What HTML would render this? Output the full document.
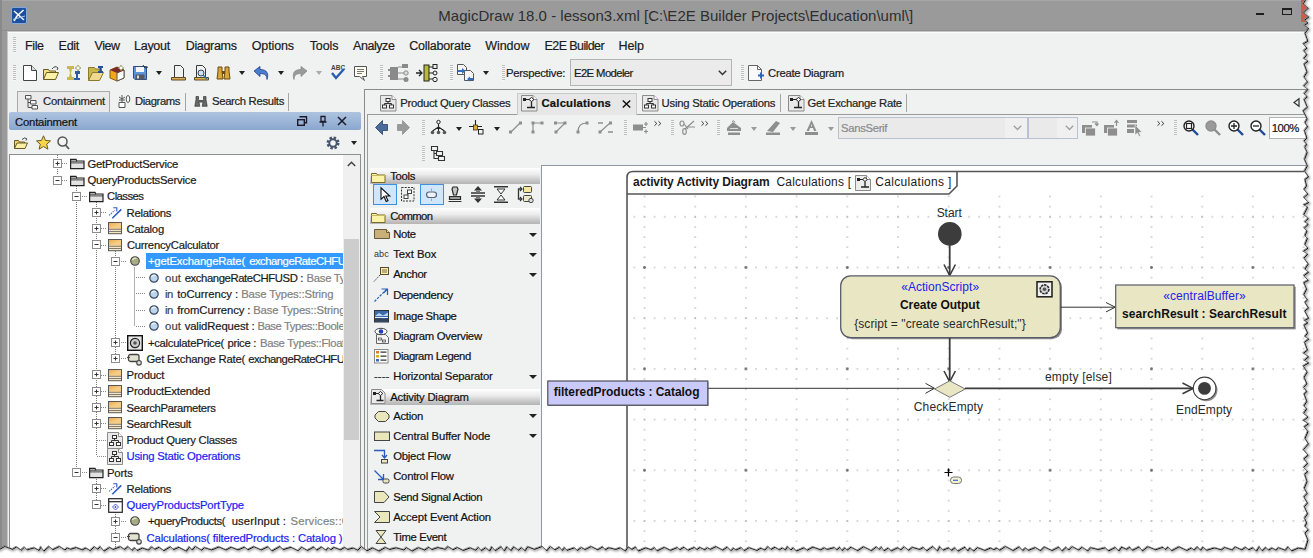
<!DOCTYPE html><html><head><meta charset="utf-8"><title>MagicDraw 18.0 - lesson3.xml</title><style>
html,body{margin:0;padding:0}
body{width:1313px;height:558px;overflow:hidden;position:relative;background:#9a9a9a;font-family:"Liberation Sans",sans-serif;font-size:11.3px;color:#1a1a1a}
.k{-webkit-text-stroke:.2px}
.a{position:absolute}
.x{position:absolute;white-space:pre}
.grip{position:absolute;width:3px;background:repeating-linear-gradient(#bdbdbd 0 1px,#f8f8f8 1px 2px)}
.arr{position:absolute;width:0;height:0;border-left:3.5px solid transparent;border-right:3.5px solid transparent;border-top:4px solid #222}
.hd{position:absolute;left:368px;width:172px;height:15px;background:linear-gradient(#fefefe,#e6e6e6 50%,#b9b9b9)}
.sel{position:absolute;border:1px solid #3d8fe0;background:#cfe6fb;box-sizing:border-box}
svg{position:absolute;overflow:visible}
i{font-style:normal}

</style></head><body>
<div class="a" style="left:8px;top:32px;width:1305px;height:526px;background:#f0f1f1"></div>
<div class="a" style="left:0;top:30px;width:1313px;height:1px;background:#8e8e8e"></div>
<div class="a" style="left:0;top:0;width:1313px;height:1px;background:#a6a6a6"></div>
<div class="a" style="left:8px;top:31px;width:1305px;height:1px;background:#c6c6c6"></div>
<div class="a" style="left:8px;top:32px;width:1305px;height:1px;background:#fcfcfc"></div>
<div class="a" style="left:7px;top:31px;width:1px;height:527px;background:#c4c4c4"></div>
<div class="a" style="left:0;top:0;width:1.500px;height:558px;background:#8a8a8a"></div>
<div class="x" style="left:438.3px;top:6.0px;line-height:20px;font-size:15px;color:#2e2e2e;letter-spacing:0.02px;">MagicDraw 18.0 - lesson3.xml [C:\E2E Builder Projects\Education\uml\]</div>
<svg style="left:11px;top:7px" width="16" height="17" viewBox="0 0 16 17"><rect x=".5" y=".5" width="15" height="16" rx="1.5" fill="#1d4f9f" stroke="#86a9dc"/><path d="M3 4 L13 13 M12.5 3 L6 9 L3 14" stroke="#fff" stroke-width="1.5" fill="none"/><path d="M2 12.5 L14 9" stroke="#a9c8f0" stroke-width="1"/></svg>
<div class="a" style="left:1255.500px;top:12.700px;width:8.500px;height:2.300px;background:#1e1e1e"></div>
<div class="a" style="left:1282px;top:7.500px;width:7.500px;height:4.500px;border:1px solid #1e1e1e;border-top-width:2px"></div>
<div class="a" style="left:1300.500px;top:0;width:12px;height:21.500px;background:#c9604f"></div>
<div class="x k" style="left:25.0px;top:37.9px;line-height:16px;font-size:12.5px;color:#1b1b1b;letter-spacing:-0.39px;">File</div>
<div class="x k" style="left:58.6px;top:37.9px;line-height:16px;font-size:12.5px;color:#1b1b1b;letter-spacing:-0.29px;">Edit</div>
<div class="x k" style="left:94.5px;top:37.9px;line-height:16px;font-size:12.5px;color:#1b1b1b;letter-spacing:-0.44px;">View</div>
<div class="x k" style="left:134.0px;top:37.9px;line-height:16px;font-size:12.5px;color:#1b1b1b;letter-spacing:-0.26px;">Layout</div>
<div class="x k" style="left:185.7px;top:37.9px;line-height:16px;font-size:12.5px;color:#1b1b1b;letter-spacing:-0.32px;">Diagrams</div>
<div class="x k" style="left:251.7px;top:37.9px;line-height:16px;font-size:12.5px;color:#1b1b1b;letter-spacing:-0.11px;">Options</div>
<div class="x k" style="left:309.7px;top:37.9px;line-height:16px;font-size:12.5px;color:#1b1b1b;letter-spacing:-0.08px;">Tools</div>
<div class="x k" style="left:353.0px;top:37.9px;line-height:16px;font-size:12.5px;color:#1b1b1b;letter-spacing:-0.44px;">Analyze</div>
<div class="x k" style="left:409.2px;top:37.9px;line-height:16px;font-size:12.5px;color:#1b1b1b;letter-spacing:-0.22px;">Collaborate</div>
<div class="x k" style="left:485.2px;top:37.9px;line-height:16px;font-size:12.5px;color:#1b1b1b;letter-spacing:-0.03px;">Window</div>
<div class="x k" style="left:544.6px;top:37.9px;line-height:16px;font-size:12.5px;color:#1b1b1b;letter-spacing:-0.60px;">E2E Builder</div>
<div class="x k" style="left:618.6px;top:37.9px;line-height:16px;font-size:12.5px;color:#1b1b1b;letter-spacing:-0.13px;">Help</div>
<div class="grip" style="left:13px;top:37px;height:16px"></div>
<div class="grip" style="left:13px;top:65px;height:16px"></div>
<div class="grip" style="left:380px;top:65px;height:16px"></div>
<div class="grip" style="left:450px;top:65px;height:16px"></div>
<div class="grip" style="left:502px;top:65px;height:16px"></div>
<div class="grip" style="left:741px;top:65px;height:16px"></div>
<div class="arr" style="left:156px;top:71px;border-top-color:#222"></div>
<div class="arr" style="left:239px;top:71px;border-top-color:#222"></div>
<div class="arr" style="left:278px;top:71px;border-top-color:#222"></div>
<div class="arr" style="left:483px;top:71px;border-top-color:#222"></div>
<div class="arr" style="left:316px;top:71px;border-top-color:#aaa"></div>
<svg style="left:23px;top:65px" width="14" height="16" viewBox="0 0 14 16"><path d="M.5 .5h8l5 5v10h-13z" fill="#fff" stroke="#444"/><path d="M8.5 .5v5h5" fill="#ddd" stroke="#444"/></svg>
<svg style="left:43px;top:66px" width="16" height="14" viewBox="0 0 16 14"><path d="M.5 13.5v-10h5l1 1.500h6v2" fill="#f5e08a" stroke="#6b5a1e"/><path d="M.5 13.500l3-7h12l-3 7z" fill="#fbf0a8" stroke="#6b5a1e"/><path d="M9 3q3-4 6-1l-1 2" fill="none" stroke="#444"/></svg>
<svg style="left:66px;top:65px" width="16" height="16" viewBox="0 0 16 16"><path d="M1 1h7v3h-2l-1 4 1 4h2v3h-7v-3h2l1-4-1-4h-2z" fill="#c8b94e"/><path d="M9 6h5v3h-2v4h2v2h-6v-2h2v-4h-1z" fill="#2a5ca8"/><path d="M12 0l1 2 2 1-2 1-1 2-1-2-2-1 2-1z" fill="#fff" stroke="#7a7a3a" stroke-width=".6"/></svg>
<svg style="left:88px;top:65px" width="16" height="16" viewBox="0 0 16 16"><path d="M.5 15.500v-13h6l1 1.500h6v3" fill="#c9b74a" stroke="#8a7a2a"/><path d="M.5 15.500l4-8h11l-4 8z" fill="#f0d890" stroke="#8a7a2a"/><path d="M10 1h5v2h-1.500v3h1.500v2h-5v-2h1.500v-3h-1.500z" fill="#234f9a"/></svg>
<svg style="left:109px;top:65px" width="16" height="16" viewBox="0 0 16 16"><path d="M1 5l7-3 7 3v8l-7 3-7-3z" fill="#f0a818" stroke="#8a5a08"/><path d="M8 8v8l7-3v-8z" fill="#fff" stroke="#555"/><path d="M1 5l7 3 7-3-7-3z" fill="#7a2a2a"/><path d="M12 0l1 2 2 1-2 1-1 2-1-2-2-1 2-1z" fill="#fff" stroke="#7a7a3a" stroke-width=".6"/></svg>
<svg style="left:133px;top:66px" width="14" height="14" viewBox="0 0 14 14"><path d="M.5 .5h13v13h-11.500l-1.500-1.500z" fill="#5a94dc" stroke="#2c4c84"/><rect x="3" y="1" width="8" height="5" fill="#f4f6fa"/><rect x="2.500" y="8.500" width="9" height="5" fill="#555a60"/><rect x="4" y="9.500" width="2" height="3" fill="#ddd"/><path d="M10-1l2 3 3-1" stroke="#333" fill="none"/></svg>
<svg style="left:171px;top:65px" width="15" height="16" viewBox="0 0 15 16"><path d="M3.500 .5h6l3 3v9h-9z" fill="url(#dg)" stroke="#3a3a3a"/><path d="M.5 12.500h14v2.500h-14z" fill="#e0b050" stroke="#5a4a2a"/></svg>
<svg style="left:194px;top:65px" width="15" height="16" viewBox="0 0 15 16"><path d="M2.500 .5h6l3 3v9h-9z" fill="url(#dg)" stroke="#3a3a3a"/><path d="M.5 12.500h14v2.500h-14z" fill="#e0b050" stroke="#5a4a2a"/><circle cx="7" cy="8" r="3" fill="#cfe0f5" stroke="#345"/><path d="M9 10l4 4" stroke="#27a" stroke-width="1.5"/></svg>
<svg style="left:216px;top:66px" width="15" height="14" viewBox="0 0 15 14"><path d="M2 1h4v4l1 8h-6l1-8zM9 1h4v4l1 8h-6l1-8z" fill="#d9a63a" stroke="#6a4a10"/><rect x="6" y="5" width="3" height="3" fill="#6a4a10"/></svg>
<svg style="left:253px;top:66px" width="17" height="14" viewBox="0 0 17 14"><path d="M1 5l6-4.500v3c7 0 9 4 7 10c0-4-2-6-7-6v3z" fill="#4a7fcf" stroke="#1d3f80" stroke-width=".8"/></svg>
<svg style="left:291px;top:66px" width="17" height="14" viewBox="0 0 17 14"><path d="M16 5l-6-4.500v3c-7 0-9 4-7 10c0-4 2-6 7-6v3z" fill="#9a9a9a" stroke="#8a8a8a" stroke-width=".8"/></svg>
<div class="x" style="left:331px;top:64px;font-size:6.5px;line-height:8px;color:#444;font-weight:bold">ABC</div>
<svg style="left:330px;top:69px" width="16" height="12" viewBox="0 0 16 12"><path d="M2 4l4 5 8-9" fill="none" stroke="#2a5cb0" stroke-width="2.4"/></svg>
<svg style="left:354px;top:66px" width="13" height="15" viewBox="0 0 13 15"><path d="M.5 .5h12v10h-4l2 4-5-4h-5z" fill="#fffef2" stroke="#555"/><path d="M3 3.500h7M3 5.500h7M3 7.500h5" stroke="#777"/></svg>
<svg style="left:389px;top:64px" width="20" height="19" viewBox="0 0 20 19"><rect x="1" y="3" width="8" height="13" fill="#8a8a8a"/><path d="M9 3h8M9 9h8M9 15h8" stroke="#8a8a8a"/><rect x="13" y="0" width="6" height="4" fill="#8a8a8a"/><circle cx="17" cy="9" r="2.200" fill="#ddd" stroke="#8a8a8a"/><circle cx="17" cy="15.500" r="2.500" fill="#8a8a8a"/><path d="M-1 6h3M-1 12h3" stroke="#8a8a8a" stroke-width="2"/></svg>
<svg style="left:416px;top:64px" width="22" height="19" viewBox="0 0 22 19"><rect x="8" y="1" width="5" height="16" fill="#b8b83a" stroke="#222"/><path d="M13 3h5M13 9h5M13 15h5" stroke="#222"/><rect x="17" y="0.500" width="4" height="4" fill="#eee" stroke="#222"/><circle cx="19" cy="9" r="2" fill="#eee" stroke="#222"/><circle cx="19" cy="15.500" r="2.200" fill="#eee" stroke="#222"/><path d="M0 9h5M3 6l3 3-3 3" stroke="#222" fill="none" stroke-width="1.300"/></svg>
<svg style="left:457px;top:64px" width="18" height="18" viewBox="0 0 18 18"><path d="M.5 .5h6l3 3v7h-9z" fill="#f4f4f4" stroke="#555"/><path d="M7.500 6.500h6l3 3v7h-9z" fill="#f4f4f4" stroke="#555"/><path d="M1 6h4v-2l3.500 3-3.500 3v-2h-4z" fill="#2e6fc4"/><path d="M16 14h-3v-1.500l-3 2.500 3 2.500v-1.500h3z" fill="#2e6fc4"/></svg>
<div class="x k" style="left:506.0px;top:64.6px;line-height:16px;letter-spacing:-0.26px;">Perspective:</div>
<div class="a" style="left:570px;top:58.700px;width:162px;height:27.500px;border:1px solid #b4b4b4;background:#ebebeb;box-sizing:border-box"></div>
<div class="x k" style="left:574.0px;top:64.6px;line-height:16px;letter-spacing:-0.60px;">E2E Modeler</div>
<svg style="left:718px;top:70px" width="9" height="6" viewBox="0 0 9 6"><path d="M.8 .8l3.700 3.700 3.700-3.700" fill="none" stroke="#333" stroke-width="1.500"/></svg>
<svg style="left:748px;top:65px" width="17" height="17" viewBox="0 0 17 17"><path d="M.5 .5h9l4 4v11h-13z" fill="#fafafa" stroke="#666"/><path d="M9.500 .5v4h4" fill="none" stroke="#666"/><path d="M10 10.500h6M13 7.500v6" stroke="#2a62c0" stroke-width="2"/></svg>
<div class="x k" style="left:768.0px;top:64.6px;line-height:16px;letter-spacing:-0.27px;">Create Diagram</div>
<div class="a" style="left:17px;top:91px;width:93px;height:22px;border:1px solid #a9a9a9;border-bottom:none;background:#eaeaea;box-sizing:border-box"></div>
<svg style="left:25px;top:94.5px" width="13" height="15" viewBox="0 0 13 15"><path d="M.5 .5h5.500v3.500h-5.500zM5.500 5.500h5.500v3.500h-5.500zM7 10.500h5.500v3.500h-5.500z" fill="#f6f6f6" stroke="#505050"/><path d="M3 4v8.500h4M3 7.500h2.500" fill="none" stroke="#505050"/></svg>
<div class="x k" style="left:43.0px;top:93.3px;line-height:16px;color:#222;letter-spacing:-0.19px;">Containment</div>
<svg style="left:117px;top:94px" width="14" height="16" viewBox="0 0 14 16"><path d="M2 8.500h6v5h-6z" fill="#fff" stroke="#555"/><path d="M5 1v7M2 3l3 2 3-2M2 6h6" stroke="#555" fill="none"/><ellipse cx="11" cy="5" rx="1.800" ry="3.500" fill="#fff" stroke="#555"/></svg>
<div class="x k" style="left:135.0px;top:93.3px;line-height:16px;color:#222;letter-spacing:-0.42px;">Diagrams</div>
<div class="a" style="left:185px;top:93px;width:1px;height:18px;background:#a5a5a5"></div>
<svg style="left:193.5px;top:96px" width="14" height="11" viewBox="0 0 14 11"><path d="M2 .5h2.500v3l1.300 6.800h-5l1.200-6.800zM9.500 .5h2.500v3l1.200 6.800h-5l1.300-6.800z" fill="#666" stroke="#3a3a3a" stroke-width=".7"/><rect x="5" y="4" width="4" height="2.500" fill="#555"/></svg>
<div class="x k" style="left:212.0px;top:93.3px;line-height:16px;color:#222;letter-spacing:-0.33px;">Search Results</div>
<div class="a" style="left:288px;top:93px;width:1px;height:18px;background:#a5a5a5"></div>
<div class="a" style="left:9px;top:112px;width:352px;height:17.500px;background:linear-gradient(#adc3df,#9db6d8 50%,#8aa6ce);border-radius:2px"></div>
<div class="x k" style="left:15.0px;top:113.8px;line-height:16px;color:#111;letter-spacing:-0.19px;">Containment</div>
<svg style="left:297px;top:116px" width="10" height="10" viewBox="0 0 10 10"><path d="M2.500 .8h7v6h-2" fill="none" stroke="#1a1a2a" stroke-width="1.400"/><rect x=".7" y="3.700" width="6.600" height="5.600" fill="none" stroke="#1a1a2a" stroke-width="1.400"/></svg>
<svg style="left:319px;top:116px" width="8" height="11" viewBox="0 0 8 11"><path d="M2 .5h4v5h-4zM.5 6h7M4 6v4.500" fill="none" stroke="#1a1a2a" stroke-width="1.300"/></svg>
<svg style="left:337px;top:116px" width="10" height="10" viewBox="0 0 10 10"><path d="M1 1l8 8M9 1l-8 8" stroke="#1a1a2a" stroke-width="1.500"/></svg>
<svg style="left:14px;top:137px" width="14" height="12" viewBox="0 0 14 12"><path d="M.5 11.500v-8h4l1 1.500h5v1.500" fill="#f1d672" stroke="#6b5a1e"/><path d="M.5 11.500l2.500-5.500h10.500l-2.500 5.500z" fill="#fbefa8" stroke="#6b5a1e"/><path d="M8 2.500q3-3 5-.5l-1 1.500" fill="none" stroke="#444"/></svg>
<svg style="left:36px;top:135px" width="15" height="15" viewBox="0 0 15 15"><path d="M7.500 .8l2 4.600 5 .5-3.800 3.300 1.200 5-4.400-2.700-4.400 2.700 1.200-5-3.800-3.300 5-.5z" fill="#f6d648" stroke="#6a5a2a"/></svg>
<svg style="left:57px;top:136px" width="13" height="14" viewBox="0 0 13 14"><circle cx="5.500" cy="5.500" r="4.500" fill="#f4f4f4" stroke="#555" stroke-width="1.500"/><path d="M8.500 9l3.500 4" stroke="#555" stroke-width="1.800"/></svg>
<svg style="left:325.7px;top:135.6px" width="14" height="14" viewBox="0 0 14 14"><circle cx="7" cy="7" r="5" fill="none" stroke="#46546e" stroke-width="3" stroke-dasharray="2.300 1.630"/><circle cx="7" cy="7" r="3.700" fill="#f4f6fa" stroke="#46546e" stroke-width="2"/></svg>
<div class="arr" style="left:351px;top:141px;border-top-color:#222"></div>
<svg width="0" height="0" style="left:0;top:0"><defs><linearGradient id="cg" x1="0" y1="0" x2="1" y2="1"><stop offset="0" stop-color="#ecab48"/><stop offset=".6" stop-color="#f6cf88"/><stop offset="1" stop-color="#f4c880"/></linearGradient></defs></svg>
<div class="a" style="left:9px;top:154px;width:352px;height:410px;border:1px solid #8e8f8f;background:#fff;box-sizing:border-box"></div>
<div class="a" style="left:343px;top:155px;width:17px;height:403px;background:#f0f0f0"></div>
<div class="a" style="left:343.500px;top:238.500px;width:15px;height:201px;background:#cdcdcd"></div>
<svg style="left:347px;top:161px" width="9" height="6" viewBox="0 0 9 6"><path d="M.8 5l3.700-3.700 3.700 3.700" fill="none" stroke="#444" stroke-width="1.500"/></svg>
<div class="a" style="left:56.8px;top:155.0px;width:1px;height:20.0px;background:repeating-linear-gradient(#777 0 1px,transparent 1px 2px)"></div>
<div class="a" style="left:76.4px;top:186.0px;width:1px;height:281.5px;background:repeating-linear-gradient(#777 0 1px,transparent 1px 2px)"></div>
<div class="a" style="left:95.5px;top:202.2px;width:1px;height:254.0px;background:repeating-linear-gradient(#777 0 1px,transparent 1px 2px)"></div>
<div class="a" style="left:95.5px;top:478.5px;width:1px;height:21.5px;background:repeating-linear-gradient(#777 0 1px,transparent 1px 2px)"></div>
<div class="a" style="left:115.1px;top:251.0px;width:1px;height:102.8px;background:repeating-linear-gradient(#777 0 1px,transparent 1px 2px)"></div>
<div class="a" style="left:115.1px;top:512.0px;width:1px;height:46.0px;background:repeating-linear-gradient(#777 0 1px,transparent 1px 2px)"></div>
<div class="a" style="left:134.0px;top:267.2px;width:1px;height:59.0px;background:#b0b0b0"></div>
<div class="a" style="left:0;top:0;width:343px;height:558px;overflow:hidden">
<div class="x k" style="left:87.4px;top:155.8px;line-height:16px;letter-spacing:-0.24px;">GetProductService</div>
<div class="x k" style="left:87.4px;top:172.0px;line-height:16px;letter-spacing:-0.21px;">QueryProductsService</div>
<div class="x k" style="left:107.0px;top:188.2px;line-height:16px;letter-spacing:-0.53px;">Classes</div>
<div class="x k" style="left:126.5px;top:204.5px;line-height:16px;letter-spacing:-0.26px;">Relations</div>
<div class="x k" style="left:126.5px;top:220.8px;line-height:16px;letter-spacing:-0.21px;">Catalog</div>
<div class="x k" style="left:126.9px;top:237.0px;line-height:16px;letter-spacing:-0.25px;">CurrencyCalculator</div>
<div class="a" style="left:146px;top:253.2px;width:197px;height:15.400px;background:#3399ff"></div>
<div class="x k" style="left:147.9px;top:253.2px;line-height:16px;color:#fff;letter-spacing:-0.18px;">+getExchangeRate(</div>
<div class="x k" style="left:249.2px;top:253.2px;line-height:16px;color:#fff;letter-spacing:-0.50px;">exchangeRateCHFUSD</div>
<div class="x k" style="left:165.1px;top:269.5px;line-height:16px;color:#444;letter-spacing:0.06px;">out</div>
<div class="x k" style="left:184.7px;top:269.5px;line-height:16px;letter-spacing:-0.40px;">exchangeRateCHFUSD :</div>
<div class="x k" style="left:306.5px;top:269.5px;line-height:16px;color:#828282;letter-spacing:-0.28px;">Base Types::Float</div>
<div class="x k" style="left:165.1px;top:285.8px;line-height:16px;color:#444;letter-spacing:-0.60px;">in</div>
<div class="x k" style="left:177.2px;top:285.8px;line-height:16px;letter-spacing:-0.06px;">toCurrency :</div>
<div class="x k" style="left:241.2px;top:285.8px;line-height:16px;color:#828282;letter-spacing:-0.14px;">Base Types::String</div>
<div class="x k" style="left:165.1px;top:302.0px;line-height:16px;color:#444;letter-spacing:-0.60px;">in</div>
<div class="x k" style="left:177.2px;top:302.0px;line-height:16px;letter-spacing:-0.11px;">fromCurrency :</div>
<div class="x k" style="left:253.2px;top:302.0px;line-height:16px;color:#828282;letter-spacing:-0.14px;">Base Types::String</div>
<div class="x k" style="left:165.1px;top:318.2px;line-height:16px;color:#444;letter-spacing:0.06px;">out</div>
<div class="x k" style="left:184.7px;top:318.2px;line-height:16px;letter-spacing:-0.13px;">validRequest :</div>
<div class="x k" style="left:257.4px;top:318.2px;line-height:16px;color:#828282;letter-spacing:-0.42px;">Base Types::Boolean</div>
<div class="x k" style="left:147.9px;top:334.5px;line-height:16px;letter-spacing:-0.29px;">+calculatePrice(</div>
<div class="x k" style="left:227.5px;top:334.5px;line-height:16px;letter-spacing:-0.32px;">price :</div>
<div class="x k" style="left:260.0px;top:334.5px;line-height:16px;color:#828282;letter-spacing:-0.31px;">Base Types::Float</div>
<div class="x k" style="left:146.5px;top:350.8px;line-height:16px;letter-spacing:-0.21px;">Get Exchange Rate(</div>
<div class="x k" style="left:248.2px;top:350.8px;line-height:16px;letter-spacing:-0.50px;">exchangeRateCHFUSD</div>
<div class="x k" style="left:126.6px;top:367.0px;line-height:16px;letter-spacing:-0.18px;">Product</div>
<div class="x k" style="left:126.6px;top:383.2px;line-height:16px;letter-spacing:-0.22px;">ProductExtended</div>
<div class="x k" style="left:126.6px;top:399.5px;line-height:16px;letter-spacing:-0.33px;">SearchParameters</div>
<div class="x k" style="left:126.6px;top:415.8px;line-height:16px;letter-spacing:-0.30px;">SearchResult</div>
<div class="x k" style="left:126.5px;top:432.0px;line-height:16px;letter-spacing:-0.28px;">Product Query Classes</div>
<div class="x k" style="left:126.5px;top:448.2px;line-height:16px;color:#1c1cf0;letter-spacing:-0.22px;">Using Static Operations</div>
<div class="x k" style="left:106.9px;top:464.5px;line-height:16px;letter-spacing:-0.12px;">Ports</div>
<div class="x k" style="left:126.5px;top:480.8px;line-height:16px;letter-spacing:-0.26px;">Relations</div>
<div class="x k" style="left:126.5px;top:497.0px;line-height:16px;color:#1c1cf0;letter-spacing:-0.15px;">QueryProductsPortType</div>
<div class="x k" style="left:147.9px;top:513.2px;line-height:16px;letter-spacing:-0.39px;">+queryProducts(</div>
<div class="x k" style="left:231.7px;top:513.2px;line-height:16px;letter-spacing:0.08px;">userInput :</div>
<div class="x k" style="left:290.6px;top:513.2px;line-height:16px;color:#828282;letter-spacing:0.15px;">Services::QueryInput</div>
<div class="x k" style="left:146.5px;top:529.5px;line-height:16px;color:#1c1cf0;letter-spacing:-0.15px;">Calculations( filteredProducts : Catalog )</div>
</div>
<svg style="left:53px;top:159px" width="9" height="9" viewBox="0 0 9 9"><rect x=".5" y=".5" width="8" height="8" fill="#fff" stroke="#8c8c8c"/><path d="M2.500 4.500h4M4.500 2.500v4" stroke="#333"/></svg>
<div class="a" style="left:62.3px;top:163.2px;width:6.0px;height:1px;background:repeating-linear-gradient(90deg,#8a8a8a 0 1px,transparent 1px 2px)"></div>
<svg style="left:69.6px;top:156.2px" width="15" height="14" viewBox="0 0 15 14"><path d="M.6 3.300h5.400l.8 1.700h7.200v7.600h-13.400z" fill="#e2e2e2" stroke="#222" stroke-width="1.200"/><path d="M.6 5.200h6.500M.6 6.900h13.400" stroke="#333" stroke-width=".9"/></svg>
<svg style="left:53px;top:176px" width="9" height="9" viewBox="0 0 9 9"><rect x=".5" y=".5" width="8" height="8" fill="#fff" stroke="#8c8c8c"/><path d="M2.500 4.500h4" stroke="#333"/></svg>
<div class="a" style="left:62.3px;top:179.5px;width:6.0px;height:1px;background:repeating-linear-gradient(90deg,#8a8a8a 0 1px,transparent 1px 2px)"></div>
<svg style="left:69.6px;top:172.5px" width="15" height="14" viewBox="0 0 15 14"><path d="M.6 3.300h5.400l.8 1.700h7.200v7.600h-13.400z" fill="#e2e2e2" stroke="#222" stroke-width="1.200"/><path d="M.6 5.200h6.500M.6 6.900h13.400" stroke="#333" stroke-width=".9"/></svg>
<svg style="left:72px;top:192px" width="9" height="9" viewBox="0 0 9 9"><rect x=".5" y=".5" width="8" height="8" fill="#fff" stroke="#8c8c8c"/><path d="M2.500 4.500h4" stroke="#333"/></svg>
<div class="a" style="left:81.9px;top:195.8px;width:6.0px;height:1px;background:repeating-linear-gradient(90deg,#8a8a8a 0 1px,transparent 1px 2px)"></div>
<svg style="left:89.2px;top:188.8px" width="15" height="14" viewBox="0 0 15 14"><path d="M.6 3.300h5.400l.8 1.700h7.200v7.600h-13.400z" fill="#e2e2e2" stroke="#222" stroke-width="1.200"/><path d="M.6 5.200h6.500M.6 6.900h13.400" stroke="#333" stroke-width=".9"/></svg>
<svg style="left:92px;top:208px" width="9" height="9" viewBox="0 0 9 9"><rect x=".5" y=".5" width="8" height="8" fill="#fff" stroke="#8c8c8c"/><path d="M2.500 4.500h4M4.500 2.500v4" stroke="#333"/></svg>
<div class="a" style="left:101.0px;top:212.0px;width:6.0px;height:1px;background:repeating-linear-gradient(90deg,#8a8a8a 0 1px,transparent 1px 2px)"></div>
<svg style="left:109.3px;top:205.5px" width="13" height="13" viewBox="0 0 13 13"><path d="M.3 9.300l5.500-5" stroke="#2a5cc0" stroke-dasharray="1.300 1" stroke-width="1.100"/><path d="M4.200 1.800h3.600v3.600" fill="none" stroke="#2a5cc0" stroke-width="1.100"/><path d="M3.300 12.200l9-8.800" stroke="#2a5cc0" stroke-width="1.500"/></svg>
<svg style="left:92px;top:224px" width="9" height="9" viewBox="0 0 9 9"><rect x=".5" y=".5" width="8" height="8" fill="#fff" stroke="#8c8c8c"/><path d="M2.500 4.500h4M4.500 2.500v4" stroke="#333"/></svg>
<div class="a" style="left:101.0px;top:228.2px;width:6.0px;height:1px;background:repeating-linear-gradient(90deg,#8a8a8a 0 1px,transparent 1px 2px)"></div>
<svg style="left:107.8px;top:222.4px" width="14" height="12" viewBox="0 0 14 12"><rect x=".5" y=".5" width="13" height="11.200" fill="#f9e6bc" stroke="#585858"/><rect x="1" y="1" width="12" height="5.800" fill="url(#cg)"/><path d="M1 7.300h12M1 9.500h12" stroke="#6e6e6e" stroke-width=".9"/></svg>
<svg style="left:92px;top:240px" width="9" height="9" viewBox="0 0 9 9"><rect x=".5" y=".5" width="8" height="8" fill="#fff" stroke="#8c8c8c"/><path d="M2.500 4.500h4" stroke="#333"/></svg>
<div class="a" style="left:101.0px;top:244.5px;width:6.0px;height:1px;background:repeating-linear-gradient(90deg,#8a8a8a 0 1px,transparent 1px 2px)"></div>
<svg style="left:107.8px;top:238.7px" width="14" height="12" viewBox="0 0 14 12"><rect x=".5" y=".5" width="13" height="11.200" fill="#f9e6bc" stroke="#585858"/><rect x="1" y="1" width="12" height="5.800" fill="url(#cg)"/><path d="M1 7.300h12M1 9.500h12" stroke="#6e6e6e" stroke-width=".9"/></svg>
<svg style="left:111px;top:257px" width="9" height="9" viewBox="0 0 9 9"><rect x=".5" y=".5" width="8" height="8" fill="#fff" stroke="#8c8c8c"/><path d="M2.500 4.500h4" stroke="#333"/></svg>
<div class="a" style="left:120.6px;top:260.8px;width:6.0px;height:1px;background:repeating-linear-gradient(90deg,#8a8a8a 0 1px,transparent 1px 2px)"></div>
<svg style="left:130.2px;top:256.1px" width="10" height="10" viewBox="0 0 10 10"><circle cx="5" cy="5" r="4.300" fill="#a8ab84" stroke="#444" stroke-width="1.100"/><path d="M2.500 4a3 3 0 0 1 4-1.500" stroke="#e8ecc0" fill="none" stroke-width="1.200"/></svg>
<div class="a" style="left:135.5px;top:277.0px;width:10.5px;height:1px;background:repeating-linear-gradient(90deg,#8a8a8a 0 1px,transparent 1px 2px)"></div>
<svg style="left:149.2px;top:272.5px" width="10" height="10" viewBox="0 0 10 10"><circle cx="5" cy="5" r="4.200" fill="#bcd4ee" stroke="#3a4a5a" stroke-width="1.200"/><path d="M2.500 4a3 3 0 0 1 4-1.500" stroke="#eef6ff" fill="none" stroke-width="1.200"/></svg>
<div class="a" style="left:135.5px;top:293.2px;width:10.5px;height:1px;background:repeating-linear-gradient(90deg,#8a8a8a 0 1px,transparent 1px 2px)"></div>
<svg style="left:149.2px;top:288.8px" width="10" height="10" viewBox="0 0 10 10"><circle cx="5" cy="5" r="4.200" fill="#bcd4ee" stroke="#3a4a5a" stroke-width="1.200"/><path d="M2.500 4a3 3 0 0 1 4-1.500" stroke="#eef6ff" fill="none" stroke-width="1.200"/></svg>
<div class="a" style="left:135.5px;top:309.5px;width:10.5px;height:1px;background:repeating-linear-gradient(90deg,#8a8a8a 0 1px,transparent 1px 2px)"></div>
<svg style="left:149.2px;top:305.0px" width="10" height="10" viewBox="0 0 10 10"><circle cx="5" cy="5" r="4.200" fill="#bcd4ee" stroke="#3a4a5a" stroke-width="1.200"/><path d="M2.500 4a3 3 0 0 1 4-1.500" stroke="#eef6ff" fill="none" stroke-width="1.200"/></svg>
<div class="a" style="left:135.5px;top:325.8px;width:10.5px;height:1px;background:repeating-linear-gradient(90deg,#8a8a8a 0 1px,transparent 1px 2px)"></div>
<svg style="left:149.2px;top:321.2px" width="10" height="10" viewBox="0 0 10 10"><circle cx="5" cy="5" r="4.200" fill="#bcd4ee" stroke="#3a4a5a" stroke-width="1.200"/><path d="M2.500 4a3 3 0 0 1 4-1.500" stroke="#eef6ff" fill="none" stroke-width="1.200"/></svg>
<svg style="left:111px;top:338px" width="9" height="9" viewBox="0 0 9 9"><rect x=".5" y=".5" width="8" height="8" fill="#fff" stroke="#8c8c8c"/><path d="M2.500 4.500h4M4.500 2.500v4" stroke="#333"/></svg>
<div class="a" style="left:120.6px;top:342.0px;width:6.0px;height:1px;background:repeating-linear-gradient(90deg,#8a8a8a 0 1px,transparent 1px 2px)"></div>
<svg style="left:126.6px;top:334.5px" width="16" height="16" viewBox="0 0 16 16"><rect x=".7" y=".7" width="14.600" height="14.600" fill="#e6e6e6" stroke="#111" stroke-width="1.400"/><circle cx="8" cy="8" r="4.600" fill="#ccc" stroke="#222" stroke-width="1.200"/><circle cx="8" cy="8" r="1.800" fill="#555"/></svg>
<svg style="left:111px;top:354px" width="9" height="9" viewBox="0 0 9 9"><rect x=".5" y=".5" width="8" height="8" fill="#fff" stroke="#8c8c8c"/><path d="M2.500 4.500h4M4.500 2.500v4" stroke="#333"/></svg>
<div class="a" style="left:120.6px;top:358.2px;width:6.0px;height:1px;background:repeating-linear-gradient(90deg,#8a8a8a 0 1px,transparent 1px 2px)"></div>
<svg style="left:127px;top:353.2px" width="15" height="12" viewBox="0 0 15 12"><rect x="1.500" y="1.500" width="10.500" height="7" rx="2" fill="#e4e2d0" stroke="#444" stroke-width="1.300"/><circle cx="12" cy="9.800" r="2.300" fill="#ddd" stroke="#444" stroke-width="1.100"/><path d="M0 4.500h3" stroke="#444"/></svg>
<svg style="left:92px;top:370px" width="9" height="9" viewBox="0 0 9 9"><rect x=".5" y=".5" width="8" height="8" fill="#fff" stroke="#8c8c8c"/><path d="M2.500 4.500h4M4.500 2.500v4" stroke="#333"/></svg>
<div class="a" style="left:101.0px;top:374.5px;width:6.0px;height:1px;background:repeating-linear-gradient(90deg,#8a8a8a 0 1px,transparent 1px 2px)"></div>
<svg style="left:107.8px;top:368.7px" width="14" height="12" viewBox="0 0 14 12"><rect x=".5" y=".5" width="13" height="11.200" fill="#f9e6bc" stroke="#585858"/><rect x="1" y="1" width="12" height="5.800" fill="url(#cg)"/><path d="M1 7.300h12M1 9.500h12" stroke="#6e6e6e" stroke-width=".9"/></svg>
<svg style="left:92px;top:387px" width="9" height="9" viewBox="0 0 9 9"><rect x=".5" y=".5" width="8" height="8" fill="#fff" stroke="#8c8c8c"/><path d="M2.500 4.500h4M4.500 2.500v4" stroke="#333"/></svg>
<div class="a" style="left:101.0px;top:390.8px;width:6.0px;height:1px;background:repeating-linear-gradient(90deg,#8a8a8a 0 1px,transparent 1px 2px)"></div>
<svg style="left:107.8px;top:384.9px" width="14" height="12" viewBox="0 0 14 12"><rect x=".5" y=".5" width="13" height="11.200" fill="#f9e6bc" stroke="#585858"/><rect x="1" y="1" width="12" height="5.800" fill="url(#cg)"/><path d="M1 7.300h12M1 9.500h12" stroke="#6e6e6e" stroke-width=".9"/></svg>
<svg style="left:92px;top:403px" width="9" height="9" viewBox="0 0 9 9"><rect x=".5" y=".5" width="8" height="8" fill="#fff" stroke="#8c8c8c"/><path d="M2.500 4.500h4M4.500 2.500v4" stroke="#333"/></svg>
<div class="a" style="left:101.0px;top:407.0px;width:6.0px;height:1px;background:repeating-linear-gradient(90deg,#8a8a8a 0 1px,transparent 1px 2px)"></div>
<svg style="left:107.8px;top:401.2px" width="14" height="12" viewBox="0 0 14 12"><rect x=".5" y=".5" width="13" height="11.200" fill="#f9e6bc" stroke="#585858"/><rect x="1" y="1" width="12" height="5.800" fill="url(#cg)"/><path d="M1 7.300h12M1 9.500h12" stroke="#6e6e6e" stroke-width=".9"/></svg>
<svg style="left:92px;top:419px" width="9" height="9" viewBox="0 0 9 9"><rect x=".5" y=".5" width="8" height="8" fill="#fff" stroke="#8c8c8c"/><path d="M2.500 4.500h4M4.500 2.500v4" stroke="#333"/></svg>
<div class="a" style="left:101.0px;top:423.2px;width:6.0px;height:1px;background:repeating-linear-gradient(90deg,#8a8a8a 0 1px,transparent 1px 2px)"></div>
<svg style="left:107.8px;top:417.4px" width="14" height="12" viewBox="0 0 14 12"><rect x=".5" y=".5" width="13" height="11.200" fill="#f9e6bc" stroke="#585858"/><rect x="1" y="1" width="12" height="5.800" fill="url(#cg)"/><path d="M1 7.300h12M1 9.500h12" stroke="#6e6e6e" stroke-width=".9"/></svg>
<div class="a" style="left:97.0px;top:439.5px;width:10.0px;height:1px;background:repeating-linear-gradient(90deg,#8a8a8a 0 1px,transparent 1px 2px)"></div>
<svg style="left:106.89999999999999px;top:431.5px" width="16" height="17" viewBox="0 0 16 17"><path d="M.5 .5h11l4 4v12h-15z" fill="#e9e9e9" stroke="#8a8a8a"/><path d="M11.500 .5v4h4" fill="#fff" stroke="#8a8a8a"/><rect x="5.500" y="3.500" width="4" height="3" fill="#fff" stroke="#333"/><rect x="2.500" y="10.500" width="4" height="3" fill="#fff" stroke="#333"/><rect x="9.500" y="10.500" width="4" height="3" fill="#fff" stroke="#333"/><path d="M7.500 6.500v2M4.500 10.500v-2h7v2" fill="none" stroke="#333"/></svg>
<div class="a" style="left:97.0px;top:455.8px;width:10.0px;height:1px;background:repeating-linear-gradient(90deg,#8a8a8a 0 1px,transparent 1px 2px)"></div>
<svg style="left:106.89999999999999px;top:447.8px" width="16" height="17" viewBox="0 0 16 17"><path d="M.5 .5h11l4 4v12h-15z" fill="#e9e9e9" stroke="#8a8a8a"/><path d="M11.500 .5v4h4" fill="#fff" stroke="#8a8a8a"/><rect x="5.500" y="3.500" width="4" height="3" fill="#fff" stroke="#333"/><rect x="2.500" y="10.500" width="4" height="3" fill="#fff" stroke="#333"/><rect x="9.500" y="10.500" width="4" height="3" fill="#fff" stroke="#333"/><path d="M7.500 6.500v2M4.500 10.500v-2h7v2" fill="none" stroke="#333"/></svg>
<svg style="left:72px;top:468px" width="9" height="9" viewBox="0 0 9 9"><rect x=".5" y=".5" width="8" height="8" fill="#fff" stroke="#8c8c8c"/><path d="M2.500 4.500h4" stroke="#333"/></svg>
<div class="a" style="left:81.9px;top:472.0px;width:6.0px;height:1px;background:repeating-linear-gradient(90deg,#8a8a8a 0 1px,transparent 1px 2px)"></div>
<svg style="left:89.2px;top:465.0px" width="15" height="14" viewBox="0 0 15 14"><path d="M.6 3.300h5.400l.8 1.700h7.200v7.600h-13.400z" fill="#e2e2e2" stroke="#222" stroke-width="1.200"/><path d="M.6 5.200h6.500M.6 6.900h13.400" stroke="#333" stroke-width=".9"/></svg>
<svg style="left:92px;top:484px" width="9" height="9" viewBox="0 0 9 9"><rect x=".5" y=".5" width="8" height="8" fill="#fff" stroke="#8c8c8c"/><path d="M2.500 4.500h4M4.500 2.500v4" stroke="#333"/></svg>
<div class="a" style="left:101.0px;top:488.2px;width:6.0px;height:1px;background:repeating-linear-gradient(90deg,#8a8a8a 0 1px,transparent 1px 2px)"></div>
<svg style="left:109.3px;top:481.8px" width="13" height="13" viewBox="0 0 13 13"><path d="M.3 9.300l5.500-5" stroke="#2a5cc0" stroke-dasharray="1.300 1" stroke-width="1.100"/><path d="M4.200 1.800h3.600v3.600" fill="none" stroke="#2a5cc0" stroke-width="1.100"/><path d="M3.300 12.200l9-8.800" stroke="#2a5cc0" stroke-width="1.500"/></svg>
<svg style="left:92px;top:500px" width="9" height="9" viewBox="0 0 9 9"><rect x=".5" y=".5" width="8" height="8" fill="#fff" stroke="#8c8c8c"/><path d="M2.500 4.500h4" stroke="#333"/></svg>
<div class="a" style="left:101.0px;top:504.5px;width:6.0px;height:1px;background:repeating-linear-gradient(90deg,#8a8a8a 0 1px,transparent 1px 2px)"></div>
<svg style="left:107.8px;top:497.5px" width="15" height="15" viewBox="0 0 15 15"><rect x=".7" y=".7" width="13.600" height="13.600" fill="#fff" stroke="#222" stroke-width="1.200"/><path d="M.7 3.700h13.600" stroke="#222" stroke-width="1.200"/><path d="M7.500 6l3 3-3 3-3-3z" fill="#fff" stroke="#3a4ad0" stroke-width=".9"/><circle cx="7.500" cy="9" r=".9" fill="#3a4ad0"/></svg>
<svg style="left:111px;top:517px" width="9" height="9" viewBox="0 0 9 9"><rect x=".5" y=".5" width="8" height="8" fill="#fff" stroke="#8c8c8c"/><path d="M2.500 4.500h4M4.500 2.500v4" stroke="#333"/></svg>
<div class="a" style="left:120.6px;top:520.8px;width:6.0px;height:1px;background:repeating-linear-gradient(90deg,#8a8a8a 0 1px,transparent 1px 2px)"></div>
<svg style="left:130.2px;top:516.0px" width="10" height="10" viewBox="0 0 10 10"><circle cx="5" cy="5" r="4.300" fill="#a8ab84" stroke="#444" stroke-width="1.100"/><path d="M2.500 4a3 3 0 0 1 4-1.500" stroke="#e8ecc0" fill="none" stroke-width="1.200"/></svg>
<svg style="left:111px;top:533px" width="9" height="9" viewBox="0 0 9 9"><rect x=".5" y=".5" width="8" height="8" fill="#fff" stroke="#8c8c8c"/><path d="M2.500 4.500h4" stroke="#333"/></svg>
<div class="a" style="left:120.6px;top:537.0px;width:6.0px;height:1px;background:repeating-linear-gradient(90deg,#8a8a8a 0 1px,transparent 1px 2px)"></div>
<svg style="left:127px;top:532.0px" width="15" height="12" viewBox="0 0 15 12"><rect x="1.500" y="1.500" width="10.500" height="7" rx="2" fill="#e4e2d0" stroke="#444" stroke-width="1.300"/><circle cx="12" cy="9.800" r="2.300" fill="#ddd" stroke="#444" stroke-width="1.100"/><path d="M0 4.500h3" stroke="#444"/></svg>
<div class="a" style="left:364px;top:89px;width:960px;height:480px;border:1px solid #8a8a8a;box-sizing:border-box"></div>
<div class="a" style="left:516.500px;top:93px;width:120px;height:21.500px;background:#e7e7e7;border:1px solid #c9c9c9;border-bottom:none;box-sizing:border-box"></div>
<div class="a" style="left:366.500px;top:114px;width:150px;height:1px;background:#9a9a9a"></div>
<div class="a" style="left:636.500px;top:114px;width:690px;height:1px;background:#9a9a9a"></div>
<div class="a" style="left:366.500px;top:114px;width:1px;height:450px;background:#9a9a9a"></div>
<svg style="left:380px;top:95px" width="17" height="17" viewBox="0 0 17 17"><path d="M.5 .5h11.500l4 4v11.500h-15.500z" fill="#e9e9e9" stroke="#8a8a8a"/><path d="M12 .5v4h4" fill="#fff" stroke="#8a8a8a"/><rect x="6" y="3.500" width="4" height="3" fill="#fff" stroke="#333"/><rect x="2.500" y="10" width="4" height="3" fill="#fff" stroke="#333"/><rect x="9.500" y="10" width="4" height="3" fill="#fff" stroke="#333"/><path d="M8 6.500v2M4.500 10v-1.500h7v1.500" fill="none" stroke="#333"/></svg>
<div class="x k" style="left:400.2px;top:94.7px;line-height:16px;color:#222;letter-spacing:-0.29px;">Product Query Classes</div>
<svg style="left:521px;top:95px" width="17" height="17" viewBox="0 0 17 17"><path d="M.5 .5h11.500l4 4v11.500h-15.500z" fill="#e9e9e9" stroke="#8a8a8a"/><path d="M12 .5v4h4" fill="#fff" stroke="#8a8a8a"/><rect x="2" y="3" width="3" height="3" fill="#222"/><path d="M5 4.500h3" stroke="#222"/><path d="M10.500 2.500l2.500 2-2.500 2-2.500-2z" fill="#fff" stroke="#222"/><path d="M10.500 6.500v5.500M6 12.500h8" stroke="#222" stroke-width="1.300"/></svg>
<div class="x k" style="left:541.5px;top:94.7px;line-height:16px;font-weight:bold;color:#111;letter-spacing:0.19px;">Calculations</div>
<svg style="left:622px;top:100px" width="9" height="8" viewBox="0 0 9 8"><path d="M.8 .5l7.400 7M8.200 .5l-7.400 7" stroke="#111" stroke-width="1.500"/></svg>
<svg style="left:642px;top:95px" width="17" height="17" viewBox="0 0 17 17"><path d="M.5 .5h11.500l4 4v11.500h-15.500z" fill="#e9e9e9" stroke="#8a8a8a"/><path d="M12 .5v4h4" fill="#fff" stroke="#8a8a8a"/><rect x="6" y="3.500" width="4" height="3" fill="#fff" stroke="#333"/><rect x="2.500" y="10" width="4" height="3" fill="#fff" stroke="#333"/><rect x="9.500" y="10" width="4" height="3" fill="#fff" stroke="#333"/><path d="M8 6.500v2M4.500 10v-1.500h7v1.500" fill="none" stroke="#333"/></svg>
<div class="x k" style="left:661.6px;top:94.7px;line-height:16px;color:#222;letter-spacing:-0.22px;">Using Static Operations</div>
<div class="a" style="left:780px;top:94px;width:1px;height:18px;background:#a5a5a5"></div>
<svg style="left:787.5px;top:95px" width="17" height="17" viewBox="0 0 17 17"><path d="M.5 .5h11.500l4 4v11.500h-15.500z" fill="#e9e9e9" stroke="#8a8a8a"/><path d="M12 .5v4h4" fill="#fff" stroke="#8a8a8a"/><rect x="2" y="3" width="3" height="3" fill="#222"/><path d="M5 4.500h3" stroke="#222"/><path d="M10.500 2.500l2.500 2-2.500 2-2.500-2z" fill="#fff" stroke="#222"/><path d="M10.500 6.500v5.500M6 12.500h8" stroke="#222" stroke-width="1.300"/></svg>
<div class="x k" style="left:807.5px;top:94.7px;line-height:16px;color:#222;letter-spacing:-0.25px;">Get Exchange Rate</div>
<div class="a" style="left:906px;top:94px;width:1px;height:18px;background:#a5a5a5"></div>
<svg style="left:1292.5px;top:98px" width="7" height="9" viewBox="0 0 7 9"><path d="M6 .8l-5 3.700 5 3.700z" fill="none" stroke="#333" stroke-width="1.200"/></svg>
<svg style="left:375px;top:120px" width="13" height="15" viewBox="0 0 13 15"><path d="M.5 7.500l7-7v4h5v6h-5v4z" fill="#4a6c9c" stroke="#2a3f5f" stroke-width=".8"/></svg>
<svg style="left:397px;top:120px" width="13" height="15" viewBox="0 0 13 15"><path d="M12.500 7.500l-7-7v4h-5v6h5v4z" fill="#9a9a9a" stroke="#909090" stroke-width=".8"/></svg>
<div class="grip" style="left:422px;top:120px;height:15px"></div>
<div class="grip" style="left:422px;top:145.5px;height:15px"></div>
<div class="grip" style="left:623.5px;top:120px;height:15px"></div>
<div class="grip" style="left:670.5px;top:120px;height:15px"></div>
<div class="grip" style="left:717px;top:120px;height:15px"></div>
<div class="grip" style="left:1173.5px;top:120px;height:15px"></div>
<svg style="left:430px;top:120px" width="17" height="15" viewBox="0 0 17 15"><circle cx="8.500" cy="2" r="1.700" fill="#fff" stroke="#222"/><path d="M8.500 4v3M8.500 7l-6 4M8.500 7l6 4M8.500 7v4" stroke="#222" fill="none" stroke-width="1.100"/><circle cx="2.500" cy="12.500" r="1.800" fill="#555"/><circle cx="8.500" cy="12.500" r="1.800" fill="#555"/><circle cx="14.500" cy="12.500" r="1.800" fill="#555"/></svg>
<div class="arr" style="left:455.5px;top:127px;border-top-color:#222"></div>
<svg style="left:469px;top:120px" width="15" height="15" viewBox="0 0 15 15"><path d="M0 6.500h13M6.500 0v10" stroke="#222" stroke-width="1.100"/><rect x="4.500" y="5" width="4" height="5" fill="#e8a838" stroke="#222" stroke-width=".7"/><rect x="9.500" y="9.500" width="4.500" height="4.500" fill="#f4f4f4" stroke="#222"/></svg>
<div class="arr" style="left:494px;top:127px;border-top-color:#222"></div>
<svg style="left:509px;top:121px" width="13" height="13" viewBox="0 0 13 13"><path d="M2 11l9-9" stroke="#8e8e8e" stroke-width="1.200"/><rect x="0" y="9.500" width="3" height="3" fill="#8e8e8e"/><rect x="10" y="0.500" width="3" height="3" fill="#8e8e8e"/></svg>
<svg style="left:530.5px;top:121px" width="13" height="13" viewBox="0 0 13 13"><path d="M2 11v-9h9" stroke="#8e8e8e" stroke-width="1.200" fill="none"/><rect x="0.500" y="9.500" width="3" height="3" fill="#8e8e8e"/><rect x="9.500" y="0.500" width="3" height="3" fill="#8e8e8e"/><rect x="0.500" y="0.500" width="3" height="3" fill="#8e8e8e"/></svg>
<svg style="left:553.5px;top:121px" width="13" height="13" viewBox="0 0 13 13"><path d="M1 2h10l-9 9" stroke="#8e8e8e" stroke-width="1.200" fill="none"/><rect x="0" y="0.500" width="3" height="3" fill="#8e8e8e"/><rect x="9.500" y="0.500" width="3" height="3" fill="#8e8e8e"/><rect x="0.500" y="9.500" width="3" height="3" fill="#8e8e8e"/></svg>
<svg style="left:576px;top:121px" width="13" height="13" viewBox="0 0 13 13"><path d="M2 11c0-6 3-9 9-9" stroke="#8e8e8e" stroke-width="1.200" fill="none"/><rect x="0.500" y="9.500" width="3" height="3" fill="#8e8e8e"/><rect x="9.500" y="0.500" width="3" height="3" fill="#8e8e8e"/></svg>
<svg style="left:597.5px;top:121px" width="15" height="13" viewBox="0 0 15 13"><path d="M2 11l10-9" stroke="#8e8e8e" stroke-width="1.200"/><path d="M0 2h5M10 11h5" stroke="#8e8e8e" stroke-width="1.500"/><rect x="0.500" y="9.500" width="3" height="3" fill="#8e8e8e"/><rect x="11" y="0.500" width="3" height="3" fill="#8e8e8e"/></svg>
<svg style="left:633px;top:122px" width="15" height="12" viewBox="0 0 15 12"><rect x="0" y="2.500" width="10" height="6" fill="#8e8e8e"/><path d="M10 5.500h3M13 0v4M11 2h4M13 7.500v4M11 9.500h4" stroke="#8e8e8e" stroke-width="1.200"/></svg>
<svg style="left:654px;top:120.5px" width="8" height="5" viewBox="0 0 8 5"><path d="M.5 .3l2.300 2.200-2.300 2.200M4.500 .3l2.300 2.200-2.300 2.200" fill="none" stroke="#333" stroke-width="1"/></svg>
<svg style="left:700.5px;top:120.5px" width="8" height="5" viewBox="0 0 8 5"><path d="M.5 .3l2.300 2.200-2.300 2.200M4.500 .3l2.300 2.200-2.300 2.200" fill="none" stroke="#333" stroke-width="1"/></svg>
<svg style="left:1157px;top:120.5px" width="8" height="5" viewBox="0 0 8 5"><path d="M.5 .3l2.300 2.200-2.300 2.200M4.500 .3l2.300 2.200-2.300 2.200" fill="none" stroke="#333" stroke-width="1"/></svg>
<svg style="left:679px;top:120px" width="16" height="15" viewBox="0 0 16 15"><path d="M5 4l4 5M15 1l-9 8M8 7h8" stroke="#8e8e8e" stroke-width="1.200" fill="none"/><ellipse cx="3" cy="3.500" rx="2" ry="2.500" fill="none" stroke="#8e8e8e" stroke-width="1.200"/><ellipse cx="5.500" cy="11.500" rx="1.800" ry="2.800" fill="none" stroke="#8e8e8e" stroke-width="1.200"/></svg>
<svg style="left:725.5px;top:120px" width="16" height="15" viewBox="0 0 16 15"><path d="M1 8l6-6 8 6v3h-14z" fill="#8e8e8e"/><path d="M2 12.500h12v2.500h-12z" fill="#8e8e8e"/><path d="M6 1.500q2-2 3 1" stroke="#8e8e8e" fill="none"/><path d="M4 8.500h8" stroke="#ddd"/></svg>
<div class="arr" style="left:750.5px;top:127px;border-top-color:#9a9a9a"></div>
<svg style="left:766px;top:120px" width="15" height="15" viewBox="0 0 15 15"><path d="M1 11l9-10 4 2-7 9z" fill="#8e8e8e"/><path d="M0 12.500h14v2.500h-14z" fill="#8e8e8e"/></svg>
<div class="arr" style="left:789.5px;top:127px;border-top-color:#9a9a9a"></div>
<svg style="left:804.5px;top:120px" width="13" height="15" viewBox="0 0 13 15"><path d="M6.500 0l-5 11h2.500l1-3h3l1 3h2.500zM5.800 6.500l.7-2.500.7 2.500z" fill="#8e8e8e"/><path d="M0 12h13v3h-13z" fill="#8e8e8e"/></svg>
<div class="arr" style="left:827.5px;top:127px;border-top-color:#9a9a9a"></div>
<div class="a" style="left:837.500px;top:117px;width:190px;height:21.500px;border:1px solid #b9c2d0;background:#eaeaea;box-sizing:border-box"></div>
<div class="a" style="left:1005px;top:118px;width:21.500px;height:19.500px;background:#f0f0f0"></div>
<div class="x k" style="left:841.0px;top:120.0px;line-height:16px;color:#8a8a8a;letter-spacing:-0.32px;">SansSerif</div>
<svg style="left:1013px;top:125px" width="9" height="6" viewBox="0 0 9 6"><path d="M.8 .8l3.700 3.700 3.700-3.700" fill="none" stroke="#a0a0a0" stroke-width="1.400"/></svg>
<div class="a" style="left:1027.500px;top:117px;width:50.500px;height:21.500px;border:1px solid #b9c2d0;background:#eaeaea;box-sizing:border-box"></div>
<div class="a" style="left:1057px;top:118px;width:20px;height:19.500px;background:#f0f0f0"></div>
<svg style="left:1064.5px;top:125px" width="9" height="6" viewBox="0 0 9 6"><path d="M.8 .8l3.700 3.700 3.700-3.700" fill="none" stroke="#a0a0a0" stroke-width="1.400"/></svg>
<svg style="left:1081.5px;top:120px" width="16" height="16" viewBox="0 0 16 16"><rect x="0" y="5" width="10" height="8" fill="#8e8e8e"/><rect x="3.500" y="8" width="10" height="8" fill="#8e8e8e" stroke="#f0f0f0" stroke-width=".8"/><path d="M10 2h5v3M13 3.500l2 2 1.500-2" stroke="#8e8e8e" fill="none" stroke-width="1.200"/></svg>
<svg style="left:1104px;top:120px" width="16" height="16" viewBox="0 0 16 16"><rect x="0" y="5" width="10" height="8" fill="#8e8e8e"/><rect x="3.500" y="8" width="10" height="8" fill="#8e8e8e" stroke="#f0f0f0" stroke-width=".8"/><path d="M12.500 6v-5M10.500 3l2-2.500 2 2.500" stroke="#8e8e8e" fill="none" stroke-width="1.200"/></svg>
<svg style="left:1127px;top:120px" width="16" height="16" viewBox="0 0 16 16"><path d="M0 0h10v3h-10zM0 4.500h10v3h-10zM0 9h7v4h-7z" fill="#8e8e8e"/><path d="M8 5l7 7-3 .3 1.500 3.500-1.500.7-1.500-3.500-2.500 2z" fill="#8e8e8e" stroke="#f0f0f0" stroke-width=".6"/></svg>
<svg style="left:1183px;top:120px" width="16" height="16" viewBox="0 0 16 16"><path d="M9.500 9.500l5.500 5.500" stroke="#1f4a9a" stroke-width="2.400"/><circle cx="6" cy="6" r="5" fill="#fff" stroke="#222" stroke-width="1.400"/><rect x="3.500" y="3.500" width="5" height="5" fill="none" stroke="#222" stroke-width="1.200"/></svg>
<svg style="left:1205px;top:120px" width="16" height="16" viewBox="0 0 16 16"><path d="M9.500 9.500l5.500 5.500" stroke="#8e8e8e" stroke-width="2.400"/><circle cx="6" cy="6" r="5" fill="#9a9a9a" stroke="#8e8e8e" stroke-width="1.400"/></svg>
<svg style="left:1227.5px;top:120px" width="16" height="16" viewBox="0 0 16 16"><path d="M9.500 9.500l5.500 5.500" stroke="#1f4a9a" stroke-width="2.400"/><circle cx="6" cy="6" r="5" fill="#fff" stroke="#222" stroke-width="1.400"/><path d="M3 6h6M6 3v6" stroke="#222" stroke-width="1.300"/></svg>
<svg style="left:1250px;top:120px" width="16" height="16" viewBox="0 0 16 16"><path d="M9.500 9.500l5.500 5.500" stroke="#1f4a9a" stroke-width="2.400"/><circle cx="6" cy="6" r="5" fill="#fff" stroke="#222" stroke-width="1.400"/><path d="M3 6h6" stroke="#222" stroke-width="1.300"/></svg>
<div class="a" style="left:1268.500px;top:117px;width:40px;height:21.500px;border:1px solid #b4b4b4;background:#fff;box-sizing:border-box"></div>
<div class="x k" style="left:1271.7px;top:120.0px;line-height:16px;color:#111;letter-spacing:-0.40px;">100%</div>
<svg style="left:431px;top:146px" width="14" height="15" viewBox="0 0 14 15"><path d="M.5 .5h6v4h-6zM5.500 5.500h6v4h-6zM7.500 10.500h6v4h-6z" fill="#f4f4f4" stroke="#333" stroke-width="1.100"/><path d="M3 4.500v8h4.500M3 7.500h2.500" fill="none" stroke="#333" stroke-width="1.100"/></svg>
<div class="a" style="left:541px;top:164.500px;width:780px;height:1px;background:#8f96a6"></div>
<div class="a" style="left:540.500px;top:165px;width:1.300px;height:400px;background:#8f96a6"></div>
<div class="a" style="left:370px;top:168.3px;width:169.500px;height:15.500px;background:linear-gradient(#ffffff,#ececec 40%,#c9c9c9 75%,#b4b4b4)"></div>
<div class="x k" style="left:390.2px;top:168.3px;line-height:16px;color:#111;letter-spacing:-0.28px;">Tools</div>
<svg style="left:371px;top:171.5px" width="15" height="11" viewBox="0 0 15 11"><path d="M.5 10.500v-9h5l1 1.500h7.500v7.500z" fill="#fbf3a8" stroke="#7a6a2a"/><path d="M.5 3.500h13.500" stroke="#c8b860"/></svg>
<div class="a" style="left:370px;top:208.3px;width:169.500px;height:15.500px;background:linear-gradient(#ffffff,#ececec 40%,#c9c9c9 75%,#b4b4b4)"></div>
<div class="x k" style="left:390.2px;top:208.3px;line-height:16px;color:#111;letter-spacing:-0.60px;">Common</div>
<svg style="left:371px;top:211.5px" width="15" height="11" viewBox="0 0 15 11"><path d="M.5 10.500v-9h5l1 1.500h7.500v7.500z" fill="#fbf3a8" stroke="#7a6a2a"/><path d="M.5 3.500h13.500" stroke="#c8b860"/></svg>
<div class="a" style="left:370px;top:389.3px;width:169.500px;height:15.500px;background:linear-gradient(#ffffff,#ececec 40%,#c9c9c9 75%,#b4b4b4)"></div>
<div class="x k" style="left:390.2px;top:389.3px;line-height:16px;color:#111;letter-spacing:-0.19px;">Activity Diagram</div>
<svg style="left:371px;top:389.3px" width="15" height="15" viewBox="0 0 15 15"><path d="M.5 .5h10l3.500 3.500v10.500h-13.500z" fill="#ececec" stroke="#8a8a8a"/><rect x="2" y="3" width="3" height="3" fill="#222"/><path d="M5 4.500h2.500" stroke="#222"/><path d="M9.500 2.500l2.300 2-2.300 2-2.300-2z" fill="#fff" stroke="#222"/><path d="M9.500 6.500v4.500M5.500 11.500h7" stroke="#222" stroke-width="1.300"/></svg>
<div class="sel" style="left:373px;top:184px;width:23.800px;height:20.700px"></div>
<div class="sel" style="left:420px;top:184px;width:23.500px;height:20.700px"></div>
<svg style="left:380px;top:187px" width="10" height="15" viewBox="0 0 10 15"><path d="M1 .8v11.500l3-2.800 2.200 5 1.800-.8-2.200-4.700h4z" fill="#fff" stroke="#111" stroke-width="1.100"/></svg>
<svg style="left:400.5px;top:187px" width="14" height="15" viewBox="0 0 14 15"><rect x=".5" y=".5" width="12.500" height="13.500" fill="none" stroke="#333" stroke-dasharray="2 1.200"/><rect x="6.500" y="3" width="4" height="3.500" fill="#fff" stroke="#444"/><rect x="3" y="8" width="4" height="3.500" fill="#fff" stroke="#444"/><path d="M6 8l2-1.500" stroke="#444"/></svg>
<svg style="left:425px;top:188px" width="13" height="13" viewBox="0 0 13 13"><rect x="1.500" y="4" width="10" height="5.500" rx="2.700" fill="#eef2fa" stroke="#5a6478" stroke-width="1.200"/><path d="M6.500 .5v2.500M6.500 10.500v2.500" stroke="#9aa6c0" stroke-width="1"/></svg>
<svg style="left:447.5px;top:186px" width="14" height="16" viewBox="0 0 14 16"><path d="M5 1h4l1 2-1.500 6h-3l-1.500-6z" fill="#c4c4c4" stroke="#2a2a2a" stroke-width="1.200"/><path d="M1.500 10.500h11v3h-11z" fill="#9a9a9a" stroke="#2a2a2a" stroke-width="1.200"/><path d="M.5 15.500h13" stroke="#333"/></svg>
<svg style="left:470.5px;top:186px" width="14" height="17" viewBox="0 0 14 17"><path d="M7 0l4 4.500h-8zM7 17l4-4.500h-8z" fill="#333"/><path d="M0 7h14M0 10h14" stroke="#333" stroke-width="1.300"/><path d="M5 4.500h4v2h-4zM5 10.500h4v2h-4z" fill="#777"/></svg>
<svg style="left:493.5px;top:186px" width="14" height="17" viewBox="0 0 14 17"><path d="M0 .8h14M0 16.200h14" stroke="#333" stroke-width="1.500"/><path d="M7 8l-4-5h8zM7 9l-4 5h8z" fill="#fff" stroke="#333"/></svg>
<svg style="left:515.5px;top:186px" width="19" height="17" viewBox="0 0 19 17"><rect x="7.500" y=".5" width="8" height="6" rx="1" fill="#f4e8a0" stroke="#444"/><rect x="7.500" y="9.500" width="8" height="6" rx="1" fill="#ece8c8" stroke="#444"/><circle cx="15" cy="14.500" r="2.200" fill="#ddd" stroke="#444"/><path d="M5.500 3h-3v10h3" stroke="#333" fill="none" stroke-width="1.300"/><path d="M4 1l2 2-2 2M4 11l2 2-2 2" stroke="#333" fill="none" stroke-width="1.100"/></svg>
<div class="x k" style="left:393.2px;top:226.3px;line-height:16px;color:#111;letter-spacing:-0.37px;">Note</div>
<svg style="left:374px;top:226.3px" width="16" height="16" viewBox="0 0 16 16"><path d="M.5 3.500h12l3 3v6h-15z" fill="#c8b078" stroke="#6a5a3a"/><path d="M12.500 3.500v3h3" fill="#e8d8a8" stroke="#6a5a3a"/></svg>
<div class="arr" style="left:529.300px;top:232.8px;border-left-width:4px;border-right-width:4px;border-top-width:4.500px"></div>
<div class="x" style="left:374.0px;top:246.3px;line-height:16px;font-size:9px;color:#333;letter-spacing:0.06px;">abc</div>
<div class="x k" style="left:393.2px;top:246.3px;line-height:16px;color:#111;">Text Box</div>
<div class="arr" style="left:529.300px;top:252.8px;border-left-width:4px;border-right-width:4px;border-top-width:4.500px"></div>
<div class="x k" style="left:393.2px;top:266.3px;line-height:16px;color:#111;letter-spacing:-0.37px;">Anchor</div>
<svg style="left:374px;top:266.3px" width="16" height="16" viewBox="0 0 16 16"><rect x="6.500" y="1.500" width="8" height="7" fill="#f8eeb0" stroke="#5a4a2a"/><path d="M8 4h5M8 6h5" stroke="#5a4a2a" stroke-width=".8"/><path d="M0 15.500l6-6.500" stroke="#444" stroke-dasharray="1.500 1"/></svg>
<div class="arr" style="left:529.300px;top:272.8px;border-left-width:4px;border-right-width:4px;border-top-width:4.500px"></div>
<div class="x k" style="left:393.2px;top:286.8px;line-height:16px;color:#111;letter-spacing:-0.38px;">Dependency</div>
<svg style="left:374px;top:286.8px" width="16" height="16" viewBox="0 0 16 16"><path d="M.5 14.500l12-12" stroke="#2a5cc0" stroke-dasharray="2.500 1.200" stroke-width="1.200"/><path d="M7.500 2h6v6M13.500 2l-4 4" stroke="#2a5cc0" fill="none" stroke-width="1.200"/></svg>
<div class="x k" style="left:393.2px;top:307.6px;line-height:16px;color:#111;letter-spacing:-0.35px;">Image Shape</div>
<svg style="left:374px;top:307.6px" width="16" height="16" viewBox="0 0 16 16"><rect x=".5" y="2.500" width="14" height="11.500" fill="#3a6ab0" stroke="#333"/><path d="M1 8l4-3 4 2.500 5-3v3.500h-13z" fill="#bcd4f0"/><path d="M1 13.500v-3l4-1 5 1.500 4-1.500v4z" fill="#34445c"/><path d="M1 9.500h13" stroke="#e8eef8"/></svg>
<div class="x k" style="left:393.2px;top:327.6px;line-height:16px;color:#111;letter-spacing:-0.27px;">Diagram Overview</div>
<svg style="left:374px;top:327.6px" width="16" height="16" viewBox="0 0 16 16"><path d="M2.500 6.500h9l3 3v6h-12z" fill="#f4f4f4" stroke="#666"/><ellipse cx="7" cy="3.500" rx="6" ry="3.200" fill="#fff" stroke="#444"/><circle cx="7" cy="3.500" r="2.300" fill="#2040b0"/><rect x="4.500" y="10" width="3" height="2" fill="none" stroke="#333" stroke-width=".7"/><rect x="8.500" y="12" width="3" height="2" fill="none" stroke="#333" stroke-width=".7"/></svg>
<div class="x k" style="left:393.2px;top:347.6px;line-height:16px;color:#111;letter-spacing:-0.42px;">Diagram Legend</div>
<svg style="left:374px;top:347.6px" width="16" height="16" viewBox="0 0 16 16"><rect x=".5" y="1.500" width="13.500" height="13.500" fill="#fff" stroke="#8a8a8a"/><rect x="2" y="3" width="3" height="2.500" fill="#e07a2a"/><rect x="2" y="7" width="3" height="2.500" fill="#d8b020"/><rect x="2" y="11" width="3" height="2.500" fill="#3a6ac0"/><path d="M6.500 4.200h6M6.500 8.200h6M6.500 12.200h6" stroke="#333" stroke-width="1.300"/></svg>
<div class="x k" style="left:374.0px;top:368.0px;line-height:16px;color:#333;letter-spacing:0.11px;">----</div>
<div class="x k" style="left:393.2px;top:368.0px;line-height:16px;color:#111;letter-spacing:-0.21px;">Horizontal Separator</div>
<div class="arr" style="left:529.300px;top:374.5px;border-left-width:4px;border-right-width:4px;border-top-width:4.500px"></div>
<div class="x k" style="left:393.2px;top:407.6px;line-height:16px;color:#111;letter-spacing:-0.25px;">Action</div>
<svg style="left:374px;top:407.6px" width="16" height="16" viewBox="0 0 16 16"><path d="M4.500 3.500h7l3.500 3.500v3l-3.500 3.500h-7l-3.500-3.500v-3z" fill="#ebe7bd" stroke="#444"/></svg>
<div class="arr" style="left:529.300px;top:414.1px;border-left-width:4px;border-right-width:4px;border-top-width:4.500px"></div>
<div class="x k" style="left:393.2px;top:427.7px;line-height:16px;color:#111;letter-spacing:-0.14px;">Central Buffer Node</div>
<svg style="left:374px;top:427.7px" width="16" height="16" viewBox="0 0 16 16"><rect x=".5" y="4" width="15" height="8.500" fill="#ebe7bd" stroke="#444"/></svg>
<div class="arr" style="left:529.300px;top:434.2px;border-left-width:4px;border-right-width:4px;border-top-width:4.500px"></div>
<div class="x k" style="left:393.2px;top:447.9px;line-height:16px;color:#111;letter-spacing:-0.22px;">Object Flow</div>
<svg style="left:374px;top:447.9px" width="16" height="16" viewBox="0 0 16 16"><path d="M0 2.500h10.500v7M8 7l2.500 3 2.500-3" stroke="#2a5cc0" fill="none" stroke-width="1.300"/><rect x="7.500" y="11.500" width="6" height="3.500" fill="#ebe7bd" stroke="#444"/></svg>
<div class="x k" style="left:393.2px;top:468.3px;line-height:16px;color:#111;letter-spacing:-0.24px;">Control Flow</div>
<svg style="left:374px;top:468.3px" width="16" height="16" viewBox="0 0 16 16"><path d="M.5 2.500l9 9M9.500 6v5.500h-5.500" stroke="#2a5cc0" fill="none" stroke-width="1.300"/><rect x="9" y="11" width="6" height="4" rx="1.500" fill="#ebe7bd" stroke="#444"/></svg>
<div class="x k" style="left:393.2px;top:488.5px;line-height:16px;color:#111;letter-spacing:-0.32px;">Send Signal Action</div>
<svg style="left:374px;top:488.5px" width="16" height="16" viewBox="0 0 16 16"><path d="M.5 2.500h9.500l5 5.500-5 5.500h-9.500z" fill="#ebe7bd" stroke="#444"/></svg>
<div class="x k" style="left:393.2px;top:508.6px;line-height:16px;color:#111;letter-spacing:-0.14px;">Accept Event Action</div>
<svg style="left:374px;top:508.6px" width="16" height="16" viewBox="0 0 16 16"><path d="M.5 2.500h15v11h-15l5.500-5.500z" fill="#ebe7bd" stroke="#444"/></svg>
<div class="x k" style="left:393.2px;top:529.0px;line-height:16px;color:#111;letter-spacing:-0.36px;">Time Event</div>
<svg style="left:374px;top:529px" width="16" height="16" viewBox="0 0 16 16"><path d="M2 1.500h10l-10 13h10z" fill="#ebe7bd" stroke="#444"/></svg>
<div class="a" style="left:541.500px;top:165.500px;width:780px;height:400px;background:#fff"></div>
<svg style="left:0;top:0" width="1313" height="558" viewBox="0 0 1313 558"><defs><pattern id="gh" x="542.10" y="165.10" width="10.14" height="50.7" patternUnits="userSpaceOnUse"><rect x=".4" y=".4" width="1.200" height="1.200" fill="#9c9c9c"/></pattern><pattern id="gv" x="542.10" y="165.10" width="50.7" height="10.14" patternUnits="userSpaceOnUse"><rect x=".4" y=".4" width="1.200" height="1.200" fill="#9c9c9c"/></pattern><pattern id="gb" x="541.60" y="164.60" width="101.4" height="101.4" patternUnits="userSpaceOnUse"><circle cx="1.500" cy="1.500" r="1.400" fill="#6e6e6e"/></pattern><clipPath id="cv"><rect x="628.500" y="195" width="700" height="370"/></clipPath></defs><g clip-path="url(#cv)"><rect x="628" y="195" width="700" height="370" fill="url(#gh)"/><rect x="628" y="195" width="700" height="370" fill="url(#gv)"/><rect x="628" y="195" width="700" height="370" fill="url(#gb)"/></g><path d="M627 565V177.500q0-6 6-6H1320" fill="none" stroke="#555" stroke-width="1.600"/><path d="M627 194H949l8-8V171.500" fill="none" stroke="#555" stroke-width="1.600"/></svg>
<div class="x" style="left:633.1px;top:174.2px;line-height:16px;font-size:12px;font-weight:bold;color:#1a1a1a;letter-spacing:-0.10px;">activity Activity Diagram</div>
<div class="x" style="left:776.5px;top:174.2px;line-height:16px;font-size:12px;color:#1a1a1a;letter-spacing:0.19px;">Calculations</div>
<div class="x" style="left:847.7px;top:174.2px;line-height:16px;font-size:12px;color:#1a1a1a;">[</div>
<svg style="left:855px;top:174.5px" width="16" height="16" viewBox="0 0 16 16"><path d="M.5 .5h11l4 4v11h-15z" fill="#ececec" stroke="#8a8a8a"/><path d="M11.500 .5v4h4" fill="#fff" stroke="#8a8a8a"/><rect x="2" y="3" width="3" height="3" fill="#222"/><path d="M5 4.500h3" stroke="#222"/><path d="M10 2.500l2.300 2-2.300 2-2.300-2z" fill="#fff" stroke="#222"/><path d="M10 6.500v5M6 12h8" stroke="#222" stroke-width="1.300"/></svg>
<div class="x" style="left:875.3px;top:174.2px;line-height:16px;font-size:12px;color:#1a1a1a;letter-spacing:0.31px;">Calculations ]</div>
<svg style="left:0;top:0" width="1313" height="558" viewBox="0 0 1313 558"><defs><filter id="sh" x="-10%" y="-10%" width="130%" height="140%"><feGaussianBlur stdDeviation=".6"/></filter></defs><g fill="#8e8e8e" filter="url(#sh)"><rect x="842.400" y="277.500" width="219.600" height="61.800" rx="10"/><rect x="1117.400" y="286.700" width="178.300" height="42.700"/><circle cx="1206.200" cy="390" r="11.300"/><rect x="548.500" y="381.800" width="160" height="24.200"/></g><circle cx="949.800" cy="233.900" r="11.800" fill="#3c3c3c"/><path d="M949.700 245V275" stroke="#3c3c3c" stroke-width="1.800"/><path d="M944 264.500l5.700 11 5.700-11" fill="none" stroke="#3c3c3c" stroke-width="1.600"/><rect x="840.700" y="275.800" width="219.600" height="61.800" rx="10" fill="#e9e6c3" stroke="#585c68" stroke-width="1.300"/><rect x="1037" y="281.800" width="15" height="15" fill="#f2f2f2" stroke="#1a1a1a" stroke-width="1.500"/><circle cx="1044.500" cy="289.300" r="4.400" fill="#d0d0d0" stroke="#2a2a2a" stroke-width="1.600" stroke-dasharray="2.500 .8"/><circle cx="1044.500" cy="289.300" r="1.800" fill="#555"/><path d="M1060.500 307.200H1115" stroke="#333" stroke-width="1"/><path d="M1106 302.500l9.300 4.700-9.300 4.700" fill="none" stroke="#333" stroke-width="1"/><rect x="1115.700" y="285" width="178.300" height="42.700" fill="#e9e6c3" stroke="#585c68" stroke-width="1.200"/><path d="M949.700 338V381" stroke="#3c3c3c" stroke-width="1.800"/><path d="M944 371l5.700 10.800 5.700-10.800" fill="none" stroke="#3c3c3c" stroke-width="1.600"/><path d="M708 388.300H934" stroke="#333" stroke-width="1"/><path d="M925.500 383.300l9 5-9 5" fill="none" stroke="#333" stroke-width="1"/><path d="M934.500 389l15.300-8.200 15.400 8.200-15.400 8.300z" fill="#e9e6c3" stroke="#777" stroke-width="1"/><path d="M965 388.400H1193" stroke="#3c3c3c" stroke-width="1.800"/><path d="M1182.500 383l10.500 5.400-10.500 5.400" fill="none" stroke="#3c3c3c" stroke-width="1.600"/><circle cx="1204.600" cy="388.400" r="11.300" fill="#fff" stroke="#3c3c3c" stroke-width="1.100"/><circle cx="1204.500" cy="388.400" r="6.400" fill="#3c3c3c"/><rect x="547.800" y="381" width="160" height="24.200" fill="#cacafa" stroke="#4e4e58" stroke-width="1.200"/><path d="M944.500 472.500h8M948.500 468.500v8" stroke="#000" stroke-width="1.200"/><rect x="950.500" y="477" width="11" height="6.500" rx="3" fill="#f4f0d0" stroke="#555" stroke-width=".8"/><path d="M953 480.300h5" stroke="#3a6ad0" stroke-width="1.200"/></svg>
<div class="x" style="left:936.7px;top:204.7px;line-height:16px;font-size:12px;color:#2a2a2a;letter-spacing:-0.07px;">Start</div>
<div class="x" style="left:901.2px;top:279.4px;line-height:16px;font-size:12px;color:#2222ee;letter-spacing:0.04px;">«ActionScript»</div>
<div class="x" style="left:899.9px;top:296.8px;line-height:16px;font-size:12px;font-weight:bold;color:#111;letter-spacing:-0.02px;">Create Output</div>
<div class="x" style="left:854.2px;top:316.2px;line-height:16px;font-size:12px;color:#2a2a2a;letter-spacing:0.08px;">{script = "create searchResult;"}</div>
<div class="x" style="left:1163.2px;top:288.0px;line-height:16px;font-size:12px;color:#2222ee;letter-spacing:0.10px;">«centralBuffer»</div>
<div class="x" style="left:1122.1px;top:305.7px;line-height:16px;font-size:12px;font-weight:bold;color:#111;letter-spacing:0.06px;">searchResult : SearchResult</div>
<div class="x" style="left:913.8px;top:399.4px;line-height:16px;font-size:12px;color:#2a2a2a;letter-spacing:0.14px;">CheckEmpty</div>
<div class="x" style="left:1045.0px;top:369.0px;line-height:16px;font-size:12px;color:#2a2a2a;letter-spacing:0.19px;">empty [else]</div>
<div class="x" style="left:1176.1px;top:402.2px;line-height:16px;font-size:12px;color:#2a2a2a;letter-spacing:0.09px;">EndEmpty</div>
<div class="x" style="left:553.8px;top:384.0px;line-height:16px;font-size:12px;font-weight:bold;color:#111;letter-spacing:-0.04px;">filteredProducts : Catalog</div>
<svg style="left:0;top:0" width="1313" height="558" viewBox="0 0 1313 558"><defs><filter id="tb" x="-5%" y="-5%" width="110%" height="110%"><feGaussianBlur stdDeviation=".8"/></filter><clipPath id="tc"><path d="M-3.0 549.7 L4.2 545.7 L11.9 548.6 L16.0 546.2 L20.6 549.4 L23.9 546.4 L26.6 549.0 L33.7 547.1 L38.4 549.7 L40.6 545.9 L43.2 550.4 L48.5 545.7 L52.1 548.9 L58.9 545.7 L64.3 549.2 L66.7 547.2 L70.1 548.5 L75.6 546.8 L81.7 549.1 L85.3 547.2 L89.6 549.9 L93.8 546.0 L97.2 548.5 L99.7 545.7 L103.5 550.3 L109.0 546.7 L112.7 548.7 L119.9 545.9 L124.0 548.7 L127.5 545.8 L131.5 549.5 L134.3 547.0 L136.8 549.8 L141.7 547.3 L147.9 549.3 L151.3 545.9 L154.3 548.6 L158.6 546.5 L163.3 549.9 L169.9 546.0 L173.0 548.8 L178.3 546.6 L185.8 550.4 L188.9 546.1 L191.7 549.3 L194.7 545.7 L201.2 549.5 L203.6 546.9 L211.1 549.2 L218.3 546.2 L225.4 549.2 L230.6 546.5 L237.4 549.1 L244.1 546.4 L247.4 549.0 L253.4 546.0 L260.6 549.2 L267.6 545.9 L271.5 550.2 L279.4 545.7 L282.7 548.8 L290.4 546.5 L297.4 549.9 L301.1 546.4 L306.9 549.7 L313.5 546.1 L316.1 549.4 L321.1 546.2 L325.4 549.4 L327.8 547.1 L330.3 548.9 L333.4 546.7 L339.9 549.0 L344.1 546.7 L347.1 548.7 L352.7 547.3 L357.3 549.5 L360.7 545.7 L366.4 550.0 L372.1 547.1 L378.4 550.3 L384.9 546.7 L389.1 548.7 L395.6 547.1 L403.2 549.2 L405.9 546.8 L411.5 550.3 L418.0 546.9 L424.1 549.3 L428.2 546.5 L431.4 548.8 L437.3 546.8 L444.6 548.5 L447.4 545.8 L452.5 549.0 L456.7 546.8 L462.7 549.7 L469.7 547.1 L475.1 549.5 L477.9 546.4 L480.8 549.9 L485.1 546.9 L489.1 550.2 L491.4 546.0 L494.7 549.9 L500.8 545.8 L503.7 550.1 L506.5 545.9 L510.4 549.8 L513.2 546.0 L517.9 549.4 L521.1 546.8 L524.5 550.0 L527.2 546.0 L533.9 548.6 L541.8 545.7 L546.2 550.1 L549.7 545.7 L554.4 549.1 L559.1 546.3 L561.7 549.7 L564.1 546.7 L566.4 549.6 L573.9 547.1 L576.8 549.7 L580.8 546.7 L584.4 548.8 L590.6 545.8 L597.1 549.0 L602.3 546.1 L604.8 549.0 L608.4 547.0 L615.1 548.7 L619.7 547.1 L624.8 550.2 L627.6 546.0 L631.3 548.6 L635.4 546.2 L637.8 550.3 L645.1 547.1 L650.7 549.0 L654.1 546.7 L656.6 550.1 L663.8 546.6 L670.0 549.6 L677.0 546.7 L679.3 548.9 L683.3 546.5 L687.5 549.4 L694.0 546.6 L696.4 548.8 L699.4 546.7 L704.1 549.0 L706.7 546.9 L709.8 548.6 L715.4 545.8 L722.2 549.4 L726.8 546.2 L730.4 549.9 L733.0 547.3 L735.3 549.3 L740.9 546.8 L743.7 549.9 L748.5 546.9 L756.3 549.7 L760.4 547.3 L764.2 549.3 L767.5 545.7 L770.4 548.7 L774.4 546.5 L778.8 549.0 L781.8 547.2 L784.8 549.1 L787.1 545.7 L790.3 549.3 L792.7 546.8 L795.9 550.3 L803.4 547.0 L806.7 549.4 L812.3 546.3 L820.0 549.1 L823.8 547.0 L826.7 548.7 L834.0 546.8 L836.3 549.0 L839.4 546.4 L841.7 549.8 L844.3 546.9 L846.7 549.3 L850.4 546.4 L857.1 549.9 L863.0 546.0 L870.8 549.9 L876.0 546.0 L878.5 548.6 L881.2 546.2 L883.5 550.0 L887.8 547.3 L890.8 550.1 L897.3 546.9 L900.2 549.1 L903.6 545.9 L908.1 549.5 L911.8 546.6 L919.0 548.7 L923.0 546.6 L926.1 550.0 L932.3 545.7 L936.9 550.1 L939.2 545.7 L942.6 549.4 L948.3 547.0 L950.9 549.6 L954.6 546.9 L957.3 550.4 L964.7 546.3 L967.2 550.1 L969.5 547.1 L973.1 550.2 L976.9 546.8 L984.4 549.7 L990.0 547.3 L993.4 548.9 L996.2 547.3 L999.2 549.4 L1004.9 545.7 L1012.6 549.8 L1018.8 546.0 L1022.2 549.8 L1025.0 547.2 L1027.9 549.6 L1034.8 546.8 L1040.1 549.9 L1043.8 546.2 L1051.4 549.8 L1058.4 546.3 L1061.6 550.2 L1065.8 546.4 L1068.0 549.3 L1071.5 545.8 L1078.0 549.2 L1081.6 546.4 L1087.2 550.2 L1090.0 546.9 L1097.6 548.8 L1104.7 547.0 L1108.1 550.1 L1115.0 546.6 L1118.3 550.2 L1121.1 546.3 L1126.0 548.6 L1129.3 546.3 L1131.9 549.6 L1138.7 546.1 L1141.9 550.1 L1147.3 545.9 L1155.0 549.0 L1162.4 546.5 L1165.0 548.8 L1167.5 546.3 L1171.2 549.9 L1178.5 546.1 L1186.3 549.7 L1190.9 547.2 L1193.5 549.2 L1197.1 546.1 L1200.1 549.5 L1202.5 546.3 L1206.1 549.5 L1213.9 547.2 L1220.8 549.1 L1224.0 546.7 L1231.6 549.2 L1234.8 546.2 L1241.2 549.1 L1245.1 546.5 L1248.2 549.0 L1252.6 546.9 L1255.8 550.4 L1258.8 545.8 L1261.7 550.0 L1265.4 546.7 L1268.1 549.4 L1271.4 547.2 L1275.5 549.4 L1277.9 546.9 L1284.7 549.5 L1287.7 546.0 L1291.1 550.2 L1297.7 547.3 L1304.5 548.5 L1307.2 539.5 L1304.3 532.4 L1307.6 529.1 L1304.1 526.1 L1305.9 522.3 L1303.8 517.6 L1306.8 513.1 L1303.6 506.1 L1306.7 502.4 L1303.1 496.3 L1306.4 492.8 L1303.5 487.7 L1306.3 481.0 L1303.9 473.6 L1307.0 471.1 L1302.8 466.8 L1306.9 463.0 L1303.1 458.2 L1307.4 454.6 L1302.6 449.1 L1307.7 443.3 L1304.3 437.9 L1307.2 430.9 L1303.5 426.2 L1307.7 423.2 L1302.5 420.3 L1307.2 416.4 L1302.8 413.0 L1305.9 408.3 L1303.1 405.4 L1306.1 400.8 L1303.4 393.4 L1306.1 391.0 L1302.8 386.8 L1306.1 383.2 L1303.4 376.7 L1306.4 371.5 L1302.5 365.4 L1307.9 362.3 L1303.3 360.0 L1307.8 356.2 L1302.5 352.7 L1306.7 349.5 L1303.8 341.6 L1308.0 338.5 L1304.1 336.2 L1306.8 332.4 L1303.3 324.6 L1307.0 322.2 L1303.5 320.0 L1307.8 317.6 L1304.0 310.4 L1307.7 307.5 L1304.2 301.8 L1306.7 299.4 L1303.0 294.2 L1305.9 288.5 L1303.0 282.1 L1307.5 279.7 L1303.0 275.1 L1307.8 271.6 L1304.1 268.7 L1307.5 263.4 L1303.2 257.6 L1306.9 253.6 L1302.5 250.9 L1307.3 247.5 L1304.0 244.3 L1306.7 237.7 L1304.1 235.3 L1306.3 230.3 L1303.4 227.7 L1307.5 223.7 L1303.8 221.5 L1307.6 217.8 L1302.9 214.3 L1306.8 206.7 L1302.9 204.4 L1307.9 202.0 L1303.1 197.0 L1307.1 193.4 L1303.3 189.0 L1305.8 185.2 L1304.2 178.8 L1307.8 176.3 L1303.8 170.5 L1306.6 165.3 L1303.8 158.8 L1306.4 151.8 L1304.0 146.6 L1305.9 143.7 L1303.2 140.6 L1306.1 137.4 L1303.7 130.0 L1306.9 126.0 L1304.2 122.3 L1306.4 118.2 L1302.4 110.3 L1306.6 106.7 L1303.4 98.9 L1306.5 96.1 L1303.3 93.2 L1307.1 88.8 L1302.8 85.6 L1306.8 81.3 L1303.2 76.6 L1306.3 71.4 L1303.4 63.5 L1307.2 60.6 L1302.9 58.2 L1306.1 54.0 L1302.8 50.3 L1306.2 47.5 L1302.5 43.2 L1307.1 40.6 L1304.3 32.7 L1307.8 27.8 L1303.4 24.8 L1307.2 22.3 L1303.8 19.5 L1308.0 16.4 L1302.7 12.3 L1307.5 7.5 L1302.5 3.3 L1306.7 -4.0 L1320 -6 L1320 570 L-6 570 Z"/></clipPath></defs><path d="M-3.0 549.7 L4.2 545.7 L11.9 548.6 L16.0 546.2 L20.6 549.4 L23.9 546.4 L26.6 549.0 L33.7 547.1 L38.4 549.7 L40.6 545.9 L43.2 550.4 L48.5 545.7 L52.1 548.9 L58.9 545.7 L64.3 549.2 L66.7 547.2 L70.1 548.5 L75.6 546.8 L81.7 549.1 L85.3 547.2 L89.6 549.9 L93.8 546.0 L97.2 548.5 L99.7 545.7 L103.5 550.3 L109.0 546.7 L112.7 548.7 L119.9 545.9 L124.0 548.7 L127.5 545.8 L131.5 549.5 L134.3 547.0 L136.8 549.8 L141.7 547.3 L147.9 549.3 L151.3 545.9 L154.3 548.6 L158.6 546.5 L163.3 549.9 L169.9 546.0 L173.0 548.8 L178.3 546.6 L185.8 550.4 L188.9 546.1 L191.7 549.3 L194.7 545.7 L201.2 549.5 L203.6 546.9 L211.1 549.2 L218.3 546.2 L225.4 549.2 L230.6 546.5 L237.4 549.1 L244.1 546.4 L247.4 549.0 L253.4 546.0 L260.6 549.2 L267.6 545.9 L271.5 550.2 L279.4 545.7 L282.7 548.8 L290.4 546.5 L297.4 549.9 L301.1 546.4 L306.9 549.7 L313.5 546.1 L316.1 549.4 L321.1 546.2 L325.4 549.4 L327.8 547.1 L330.3 548.9 L333.4 546.7 L339.9 549.0 L344.1 546.7 L347.1 548.7 L352.7 547.3 L357.3 549.5 L360.7 545.7 L366.4 550.0 L372.1 547.1 L378.4 550.3 L384.9 546.7 L389.1 548.7 L395.6 547.1 L403.2 549.2 L405.9 546.8 L411.5 550.3 L418.0 546.9 L424.1 549.3 L428.2 546.5 L431.4 548.8 L437.3 546.8 L444.6 548.5 L447.4 545.8 L452.5 549.0 L456.7 546.8 L462.7 549.7 L469.7 547.1 L475.1 549.5 L477.9 546.4 L480.8 549.9 L485.1 546.9 L489.1 550.2 L491.4 546.0 L494.7 549.9 L500.8 545.8 L503.7 550.1 L506.5 545.9 L510.4 549.8 L513.2 546.0 L517.9 549.4 L521.1 546.8 L524.5 550.0 L527.2 546.0 L533.9 548.6 L541.8 545.7 L546.2 550.1 L549.7 545.7 L554.4 549.1 L559.1 546.3 L561.7 549.7 L564.1 546.7 L566.4 549.6 L573.9 547.1 L576.8 549.7 L580.8 546.7 L584.4 548.8 L590.6 545.8 L597.1 549.0 L602.3 546.1 L604.8 549.0 L608.4 547.0 L615.1 548.7 L619.7 547.1 L624.8 550.2 L627.6 546.0 L631.3 548.6 L635.4 546.2 L637.8 550.3 L645.1 547.1 L650.7 549.0 L654.1 546.7 L656.6 550.1 L663.8 546.6 L670.0 549.6 L677.0 546.7 L679.3 548.9 L683.3 546.5 L687.5 549.4 L694.0 546.6 L696.4 548.8 L699.4 546.7 L704.1 549.0 L706.7 546.9 L709.8 548.6 L715.4 545.8 L722.2 549.4 L726.8 546.2 L730.4 549.9 L733.0 547.3 L735.3 549.3 L740.9 546.8 L743.7 549.9 L748.5 546.9 L756.3 549.7 L760.4 547.3 L764.2 549.3 L767.5 545.7 L770.4 548.7 L774.4 546.5 L778.8 549.0 L781.8 547.2 L784.8 549.1 L787.1 545.7 L790.3 549.3 L792.7 546.8 L795.9 550.3 L803.4 547.0 L806.7 549.4 L812.3 546.3 L820.0 549.1 L823.8 547.0 L826.7 548.7 L834.0 546.8 L836.3 549.0 L839.4 546.4 L841.7 549.8 L844.3 546.9 L846.7 549.3 L850.4 546.4 L857.1 549.9 L863.0 546.0 L870.8 549.9 L876.0 546.0 L878.5 548.6 L881.2 546.2 L883.5 550.0 L887.8 547.3 L890.8 550.1 L897.3 546.9 L900.2 549.1 L903.6 545.9 L908.1 549.5 L911.8 546.6 L919.0 548.7 L923.0 546.6 L926.1 550.0 L932.3 545.7 L936.9 550.1 L939.2 545.7 L942.6 549.4 L948.3 547.0 L950.9 549.6 L954.6 546.9 L957.3 550.4 L964.7 546.3 L967.2 550.1 L969.5 547.1 L973.1 550.2 L976.9 546.8 L984.4 549.7 L990.0 547.3 L993.4 548.9 L996.2 547.3 L999.2 549.4 L1004.9 545.7 L1012.6 549.8 L1018.8 546.0 L1022.2 549.8 L1025.0 547.2 L1027.9 549.6 L1034.8 546.8 L1040.1 549.9 L1043.8 546.2 L1051.4 549.8 L1058.4 546.3 L1061.6 550.2 L1065.8 546.4 L1068.0 549.3 L1071.5 545.8 L1078.0 549.2 L1081.6 546.4 L1087.2 550.2 L1090.0 546.9 L1097.6 548.8 L1104.7 547.0 L1108.1 550.1 L1115.0 546.6 L1118.3 550.2 L1121.1 546.3 L1126.0 548.6 L1129.3 546.3 L1131.9 549.6 L1138.7 546.1 L1141.9 550.1 L1147.3 545.9 L1155.0 549.0 L1162.4 546.5 L1165.0 548.8 L1167.5 546.3 L1171.2 549.9 L1178.5 546.1 L1186.3 549.7 L1190.9 547.2 L1193.5 549.2 L1197.1 546.1 L1200.1 549.5 L1202.5 546.3 L1206.1 549.5 L1213.9 547.2 L1220.8 549.1 L1224.0 546.7 L1231.6 549.2 L1234.8 546.2 L1241.2 549.1 L1245.1 546.5 L1248.2 549.0 L1252.6 546.9 L1255.8 550.4 L1258.8 545.8 L1261.7 550.0 L1265.4 546.7 L1268.1 549.4 L1271.4 547.2 L1275.5 549.4 L1277.9 546.9 L1284.7 549.5 L1287.7 546.0 L1291.1 550.2 L1297.7 547.3 L1304.5 548.5 L1307.2 539.5 L1304.3 532.4 L1307.6 529.1 L1304.1 526.1 L1305.9 522.3 L1303.8 517.6 L1306.8 513.1 L1303.6 506.1 L1306.7 502.4 L1303.1 496.3 L1306.4 492.8 L1303.5 487.7 L1306.3 481.0 L1303.9 473.6 L1307.0 471.1 L1302.8 466.8 L1306.9 463.0 L1303.1 458.2 L1307.4 454.6 L1302.6 449.1 L1307.7 443.3 L1304.3 437.9 L1307.2 430.9 L1303.5 426.2 L1307.7 423.2 L1302.5 420.3 L1307.2 416.4 L1302.8 413.0 L1305.9 408.3 L1303.1 405.4 L1306.1 400.8 L1303.4 393.4 L1306.1 391.0 L1302.8 386.8 L1306.1 383.2 L1303.4 376.7 L1306.4 371.5 L1302.5 365.4 L1307.9 362.3 L1303.3 360.0 L1307.8 356.2 L1302.5 352.7 L1306.7 349.5 L1303.8 341.6 L1308.0 338.5 L1304.1 336.2 L1306.8 332.4 L1303.3 324.6 L1307.0 322.2 L1303.5 320.0 L1307.8 317.6 L1304.0 310.4 L1307.7 307.5 L1304.2 301.8 L1306.7 299.4 L1303.0 294.2 L1305.9 288.5 L1303.0 282.1 L1307.5 279.7 L1303.0 275.1 L1307.8 271.6 L1304.1 268.7 L1307.5 263.4 L1303.2 257.6 L1306.9 253.6 L1302.5 250.9 L1307.3 247.5 L1304.0 244.3 L1306.7 237.7 L1304.1 235.3 L1306.3 230.3 L1303.4 227.7 L1307.5 223.7 L1303.8 221.5 L1307.6 217.8 L1302.9 214.3 L1306.8 206.7 L1302.9 204.4 L1307.9 202.0 L1303.1 197.0 L1307.1 193.4 L1303.3 189.0 L1305.8 185.2 L1304.2 178.8 L1307.8 176.3 L1303.8 170.5 L1306.6 165.3 L1303.8 158.8 L1306.4 151.8 L1304.0 146.6 L1305.9 143.7 L1303.2 140.6 L1306.1 137.4 L1303.7 130.0 L1306.9 126.0 L1304.2 122.3 L1306.4 118.2 L1302.4 110.3 L1306.6 106.7 L1303.4 98.9 L1306.5 96.1 L1303.3 93.2 L1307.1 88.8 L1302.8 85.6 L1306.8 81.3 L1303.2 76.6 L1306.3 71.4 L1303.4 63.5 L1307.2 60.6 L1302.9 58.2 L1306.1 54.0 L1302.8 50.3 L1306.2 47.5 L1302.5 43.2 L1307.1 40.6 L1304.3 32.7 L1307.8 27.8 L1303.4 24.8 L1307.2 22.3 L1303.8 19.5 L1308.0 16.4 L1302.7 12.3 L1307.5 7.5 L1302.5 3.3 L1306.7 -4.0 L1320 -6 L1320 570 L-6 570 Z" fill="#fff"/><g clip-path="url(#tc)"><path d="M-3.0 549.7 L4.2 545.7 L11.9 548.6 L16.0 546.2 L20.6 549.4 L23.9 546.4 L26.6 549.0 L33.7 547.1 L38.4 549.7 L40.6 545.9 L43.2 550.4 L48.5 545.7 L52.1 548.9 L58.9 545.7 L64.3 549.2 L66.7 547.2 L70.1 548.5 L75.6 546.8 L81.7 549.1 L85.3 547.2 L89.6 549.9 L93.8 546.0 L97.2 548.5 L99.7 545.7 L103.5 550.3 L109.0 546.7 L112.7 548.7 L119.9 545.9 L124.0 548.7 L127.5 545.8 L131.5 549.5 L134.3 547.0 L136.8 549.8 L141.7 547.3 L147.9 549.3 L151.3 545.9 L154.3 548.6 L158.6 546.5 L163.3 549.9 L169.9 546.0 L173.0 548.8 L178.3 546.6 L185.8 550.4 L188.9 546.1 L191.7 549.3 L194.7 545.7 L201.2 549.5 L203.6 546.9 L211.1 549.2 L218.3 546.2 L225.4 549.2 L230.6 546.5 L237.4 549.1 L244.1 546.4 L247.4 549.0 L253.4 546.0 L260.6 549.2 L267.6 545.9 L271.5 550.2 L279.4 545.7 L282.7 548.8 L290.4 546.5 L297.4 549.9 L301.1 546.4 L306.9 549.7 L313.5 546.1 L316.1 549.4 L321.1 546.2 L325.4 549.4 L327.8 547.1 L330.3 548.9 L333.4 546.7 L339.9 549.0 L344.1 546.7 L347.1 548.7 L352.7 547.3 L357.3 549.5 L360.7 545.7 L366.4 550.0 L372.1 547.1 L378.4 550.3 L384.9 546.7 L389.1 548.7 L395.6 547.1 L403.2 549.2 L405.9 546.8 L411.5 550.3 L418.0 546.9 L424.1 549.3 L428.2 546.5 L431.4 548.8 L437.3 546.8 L444.6 548.5 L447.4 545.8 L452.5 549.0 L456.7 546.8 L462.7 549.7 L469.7 547.1 L475.1 549.5 L477.9 546.4 L480.8 549.9 L485.1 546.9 L489.1 550.2 L491.4 546.0 L494.7 549.9 L500.8 545.8 L503.7 550.1 L506.5 545.9 L510.4 549.8 L513.2 546.0 L517.9 549.4 L521.1 546.8 L524.5 550.0 L527.2 546.0 L533.9 548.6 L541.8 545.7 L546.2 550.1 L549.7 545.7 L554.4 549.1 L559.1 546.3 L561.7 549.7 L564.1 546.7 L566.4 549.6 L573.9 547.1 L576.8 549.7 L580.8 546.7 L584.4 548.8 L590.6 545.8 L597.1 549.0 L602.3 546.1 L604.8 549.0 L608.4 547.0 L615.1 548.7 L619.7 547.1 L624.8 550.2 L627.6 546.0 L631.3 548.6 L635.4 546.2 L637.8 550.3 L645.1 547.1 L650.7 549.0 L654.1 546.7 L656.6 550.1 L663.8 546.6 L670.0 549.6 L677.0 546.7 L679.3 548.9 L683.3 546.5 L687.5 549.4 L694.0 546.6 L696.4 548.8 L699.4 546.7 L704.1 549.0 L706.7 546.9 L709.8 548.6 L715.4 545.8 L722.2 549.4 L726.8 546.2 L730.4 549.9 L733.0 547.3 L735.3 549.3 L740.9 546.8 L743.7 549.9 L748.5 546.9 L756.3 549.7 L760.4 547.3 L764.2 549.3 L767.5 545.7 L770.4 548.7 L774.4 546.5 L778.8 549.0 L781.8 547.2 L784.8 549.1 L787.1 545.7 L790.3 549.3 L792.7 546.8 L795.9 550.3 L803.4 547.0 L806.7 549.4 L812.3 546.3 L820.0 549.1 L823.8 547.0 L826.7 548.7 L834.0 546.8 L836.3 549.0 L839.4 546.4 L841.7 549.8 L844.3 546.9 L846.7 549.3 L850.4 546.4 L857.1 549.9 L863.0 546.0 L870.8 549.9 L876.0 546.0 L878.5 548.6 L881.2 546.2 L883.5 550.0 L887.8 547.3 L890.8 550.1 L897.3 546.9 L900.2 549.1 L903.6 545.9 L908.1 549.5 L911.8 546.6 L919.0 548.7 L923.0 546.6 L926.1 550.0 L932.3 545.7 L936.9 550.1 L939.2 545.7 L942.6 549.4 L948.3 547.0 L950.9 549.6 L954.6 546.9 L957.3 550.4 L964.7 546.3 L967.2 550.1 L969.5 547.1 L973.1 550.2 L976.9 546.8 L984.4 549.7 L990.0 547.3 L993.4 548.9 L996.2 547.3 L999.2 549.4 L1004.9 545.7 L1012.6 549.8 L1018.8 546.0 L1022.2 549.8 L1025.0 547.2 L1027.9 549.6 L1034.8 546.8 L1040.1 549.9 L1043.8 546.2 L1051.4 549.8 L1058.4 546.3 L1061.6 550.2 L1065.8 546.4 L1068.0 549.3 L1071.5 545.8 L1078.0 549.2 L1081.6 546.4 L1087.2 550.2 L1090.0 546.9 L1097.6 548.8 L1104.7 547.0 L1108.1 550.1 L1115.0 546.6 L1118.3 550.2 L1121.1 546.3 L1126.0 548.6 L1129.3 546.3 L1131.9 549.6 L1138.7 546.1 L1141.9 550.1 L1147.3 545.9 L1155.0 549.0 L1162.4 546.5 L1165.0 548.8 L1167.5 546.3 L1171.2 549.9 L1178.5 546.1 L1186.3 549.7 L1190.9 547.2 L1193.5 549.2 L1197.1 546.1 L1200.1 549.5 L1202.5 546.3 L1206.1 549.5 L1213.9 547.2 L1220.8 549.1 L1224.0 546.7 L1231.6 549.2 L1234.8 546.2 L1241.2 549.1 L1245.1 546.5 L1248.2 549.0 L1252.6 546.9 L1255.8 550.4 L1258.8 545.8 L1261.7 550.0 L1265.4 546.7 L1268.1 549.4 L1271.4 547.2 L1275.5 549.4 L1277.9 546.9 L1284.7 549.5 L1287.7 546.0 L1291.1 550.2 L1297.7 547.3 L1304.5 548.5 L1307.2 539.5 L1304.3 532.4 L1307.6 529.1 L1304.1 526.1 L1305.9 522.3 L1303.8 517.6 L1306.8 513.1 L1303.6 506.1 L1306.7 502.4 L1303.1 496.3 L1306.4 492.8 L1303.5 487.7 L1306.3 481.0 L1303.9 473.6 L1307.0 471.1 L1302.8 466.8 L1306.9 463.0 L1303.1 458.2 L1307.4 454.6 L1302.6 449.1 L1307.7 443.3 L1304.3 437.9 L1307.2 430.9 L1303.5 426.2 L1307.7 423.2 L1302.5 420.3 L1307.2 416.4 L1302.8 413.0 L1305.9 408.3 L1303.1 405.4 L1306.1 400.8 L1303.4 393.4 L1306.1 391.0 L1302.8 386.8 L1306.1 383.2 L1303.4 376.7 L1306.4 371.5 L1302.5 365.4 L1307.9 362.3 L1303.3 360.0 L1307.8 356.2 L1302.5 352.7 L1306.7 349.5 L1303.8 341.6 L1308.0 338.5 L1304.1 336.2 L1306.8 332.4 L1303.3 324.6 L1307.0 322.2 L1303.5 320.0 L1307.8 317.6 L1304.0 310.4 L1307.7 307.5 L1304.2 301.8 L1306.7 299.4 L1303.0 294.2 L1305.9 288.5 L1303.0 282.1 L1307.5 279.7 L1303.0 275.1 L1307.8 271.6 L1304.1 268.7 L1307.5 263.4 L1303.2 257.6 L1306.9 253.6 L1302.5 250.9 L1307.3 247.5 L1304.0 244.3 L1306.7 237.7 L1304.1 235.3 L1306.3 230.3 L1303.4 227.7 L1307.5 223.7 L1303.8 221.5 L1307.6 217.8 L1302.9 214.3 L1306.8 206.7 L1302.9 204.4 L1307.9 202.0 L1303.1 197.0 L1307.1 193.4 L1303.3 189.0 L1305.8 185.2 L1304.2 178.8 L1307.8 176.3 L1303.8 170.5 L1306.6 165.3 L1303.8 158.8 L1306.4 151.8 L1304.0 146.6 L1305.9 143.7 L1303.2 140.6 L1306.1 137.4 L1303.7 130.0 L1306.9 126.0 L1304.2 122.3 L1306.4 118.2 L1302.4 110.3 L1306.6 106.7 L1303.4 98.9 L1306.5 96.1 L1303.3 93.2 L1307.1 88.8 L1302.8 85.6 L1306.8 81.3 L1303.2 76.6 L1306.3 71.4 L1303.4 63.5 L1307.2 60.6 L1302.9 58.2 L1306.1 54.0 L1302.8 50.3 L1306.2 47.5 L1302.5 43.2 L1307.1 40.6 L1304.3 32.7 L1307.8 27.8 L1303.4 24.8 L1307.2 22.3 L1303.8 19.5 L1308.0 16.4 L1302.7 12.3 L1307.5 7.5 L1302.5 3.3 L1306.7 -4.0" transform="translate(1.300 1.600)" fill="none" stroke="#000" stroke-width="2.200" stroke-opacity=".38" filter="url(#tb)"/><path d="M-3.0 549.7 L4.2 545.7 L11.9 548.6 L16.0 546.2 L20.6 549.4 L23.9 546.4 L26.6 549.0 L33.7 547.1 L38.4 549.7 L40.6 545.9 L43.2 550.4 L48.5 545.7 L52.1 548.9 L58.9 545.7 L64.3 549.2 L66.7 547.2 L70.1 548.5 L75.6 546.8 L81.7 549.1 L85.3 547.2 L89.6 549.9 L93.8 546.0 L97.2 548.5 L99.7 545.7 L103.5 550.3 L109.0 546.7 L112.7 548.7 L119.9 545.9 L124.0 548.7 L127.5 545.8 L131.5 549.5 L134.3 547.0 L136.8 549.8 L141.7 547.3 L147.9 549.3 L151.3 545.9 L154.3 548.6 L158.6 546.5 L163.3 549.9 L169.9 546.0 L173.0 548.8 L178.3 546.6 L185.8 550.4 L188.9 546.1 L191.7 549.3 L194.7 545.7 L201.2 549.5 L203.6 546.9 L211.1 549.2 L218.3 546.2 L225.4 549.2 L230.6 546.5 L237.4 549.1 L244.1 546.4 L247.4 549.0 L253.4 546.0 L260.6 549.2 L267.6 545.9 L271.5 550.2 L279.4 545.7 L282.7 548.8 L290.4 546.5 L297.4 549.9 L301.1 546.4 L306.9 549.7 L313.5 546.1 L316.1 549.4 L321.1 546.2 L325.4 549.4 L327.8 547.1 L330.3 548.9 L333.4 546.7 L339.9 549.0 L344.1 546.7 L347.1 548.7 L352.7 547.3 L357.3 549.5 L360.7 545.7 L366.4 550.0 L372.1 547.1 L378.4 550.3 L384.9 546.7 L389.1 548.7 L395.6 547.1 L403.2 549.2 L405.9 546.8 L411.5 550.3 L418.0 546.9 L424.1 549.3 L428.2 546.5 L431.4 548.8 L437.3 546.8 L444.6 548.5 L447.4 545.8 L452.5 549.0 L456.7 546.8 L462.7 549.7 L469.7 547.1 L475.1 549.5 L477.9 546.4 L480.8 549.9 L485.1 546.9 L489.1 550.2 L491.4 546.0 L494.7 549.9 L500.8 545.8 L503.7 550.1 L506.5 545.9 L510.4 549.8 L513.2 546.0 L517.9 549.4 L521.1 546.8 L524.5 550.0 L527.2 546.0 L533.9 548.6 L541.8 545.7 L546.2 550.1 L549.7 545.7 L554.4 549.1 L559.1 546.3 L561.7 549.7 L564.1 546.7 L566.4 549.6 L573.9 547.1 L576.8 549.7 L580.8 546.7 L584.4 548.8 L590.6 545.8 L597.1 549.0 L602.3 546.1 L604.8 549.0 L608.4 547.0 L615.1 548.7 L619.7 547.1 L624.8 550.2 L627.6 546.0 L631.3 548.6 L635.4 546.2 L637.8 550.3 L645.1 547.1 L650.7 549.0 L654.1 546.7 L656.6 550.1 L663.8 546.6 L670.0 549.6 L677.0 546.7 L679.3 548.9 L683.3 546.5 L687.5 549.4 L694.0 546.6 L696.4 548.8 L699.4 546.7 L704.1 549.0 L706.7 546.9 L709.8 548.6 L715.4 545.8 L722.2 549.4 L726.8 546.2 L730.4 549.9 L733.0 547.3 L735.3 549.3 L740.9 546.8 L743.7 549.9 L748.5 546.9 L756.3 549.7 L760.4 547.3 L764.2 549.3 L767.5 545.7 L770.4 548.7 L774.4 546.5 L778.8 549.0 L781.8 547.2 L784.8 549.1 L787.1 545.7 L790.3 549.3 L792.7 546.8 L795.9 550.3 L803.4 547.0 L806.7 549.4 L812.3 546.3 L820.0 549.1 L823.8 547.0 L826.7 548.7 L834.0 546.8 L836.3 549.0 L839.4 546.4 L841.7 549.8 L844.3 546.9 L846.7 549.3 L850.4 546.4 L857.1 549.9 L863.0 546.0 L870.8 549.9 L876.0 546.0 L878.5 548.6 L881.2 546.2 L883.5 550.0 L887.8 547.3 L890.8 550.1 L897.3 546.9 L900.2 549.1 L903.6 545.9 L908.1 549.5 L911.8 546.6 L919.0 548.7 L923.0 546.6 L926.1 550.0 L932.3 545.7 L936.9 550.1 L939.2 545.7 L942.6 549.4 L948.3 547.0 L950.9 549.6 L954.6 546.9 L957.3 550.4 L964.7 546.3 L967.2 550.1 L969.5 547.1 L973.1 550.2 L976.9 546.8 L984.4 549.7 L990.0 547.3 L993.4 548.9 L996.2 547.3 L999.2 549.4 L1004.9 545.7 L1012.6 549.8 L1018.8 546.0 L1022.2 549.8 L1025.0 547.2 L1027.9 549.6 L1034.8 546.8 L1040.1 549.9 L1043.8 546.2 L1051.4 549.8 L1058.4 546.3 L1061.6 550.2 L1065.8 546.4 L1068.0 549.3 L1071.5 545.8 L1078.0 549.2 L1081.6 546.4 L1087.2 550.2 L1090.0 546.9 L1097.6 548.8 L1104.7 547.0 L1108.1 550.1 L1115.0 546.6 L1118.3 550.2 L1121.1 546.3 L1126.0 548.6 L1129.3 546.3 L1131.9 549.6 L1138.7 546.1 L1141.9 550.1 L1147.3 545.9 L1155.0 549.0 L1162.4 546.5 L1165.0 548.8 L1167.5 546.3 L1171.2 549.9 L1178.5 546.1 L1186.3 549.7 L1190.9 547.2 L1193.5 549.2 L1197.1 546.1 L1200.1 549.5 L1202.5 546.3 L1206.1 549.5 L1213.9 547.2 L1220.8 549.1 L1224.0 546.7 L1231.6 549.2 L1234.8 546.2 L1241.2 549.1 L1245.1 546.5 L1248.2 549.0 L1252.6 546.9 L1255.8 550.4 L1258.8 545.8 L1261.7 550.0 L1265.4 546.7 L1268.1 549.4 L1271.4 547.2 L1275.5 549.4 L1277.9 546.9 L1284.7 549.5 L1287.7 546.0 L1291.1 550.2 L1297.7 547.3 L1304.5 548.5 L1307.2 539.5 L1304.3 532.4 L1307.6 529.1 L1304.1 526.1 L1305.9 522.3 L1303.8 517.6 L1306.8 513.1 L1303.6 506.1 L1306.7 502.4 L1303.1 496.3 L1306.4 492.8 L1303.5 487.7 L1306.3 481.0 L1303.9 473.6 L1307.0 471.1 L1302.8 466.8 L1306.9 463.0 L1303.1 458.2 L1307.4 454.6 L1302.6 449.1 L1307.7 443.3 L1304.3 437.9 L1307.2 430.9 L1303.5 426.2 L1307.7 423.2 L1302.5 420.3 L1307.2 416.4 L1302.8 413.0 L1305.9 408.3 L1303.1 405.4 L1306.1 400.8 L1303.4 393.4 L1306.1 391.0 L1302.8 386.8 L1306.1 383.2 L1303.4 376.7 L1306.4 371.5 L1302.5 365.4 L1307.9 362.3 L1303.3 360.0 L1307.8 356.2 L1302.5 352.7 L1306.7 349.5 L1303.8 341.6 L1308.0 338.5 L1304.1 336.2 L1306.8 332.4 L1303.3 324.6 L1307.0 322.2 L1303.5 320.0 L1307.8 317.6 L1304.0 310.4 L1307.7 307.5 L1304.2 301.8 L1306.7 299.4 L1303.0 294.2 L1305.9 288.5 L1303.0 282.1 L1307.5 279.7 L1303.0 275.1 L1307.8 271.6 L1304.1 268.7 L1307.5 263.4 L1303.2 257.6 L1306.9 253.6 L1302.5 250.9 L1307.3 247.5 L1304.0 244.3 L1306.7 237.7 L1304.1 235.3 L1306.3 230.3 L1303.4 227.7 L1307.5 223.7 L1303.8 221.5 L1307.6 217.8 L1302.9 214.3 L1306.8 206.7 L1302.9 204.4 L1307.9 202.0 L1303.1 197.0 L1307.1 193.4 L1303.3 189.0 L1305.8 185.2 L1304.2 178.8 L1307.8 176.3 L1303.8 170.5 L1306.6 165.3 L1303.8 158.8 L1306.4 151.8 L1304.0 146.6 L1305.9 143.7 L1303.2 140.6 L1306.1 137.4 L1303.7 130.0 L1306.9 126.0 L1304.2 122.3 L1306.4 118.2 L1302.4 110.3 L1306.6 106.7 L1303.4 98.9 L1306.5 96.1 L1303.3 93.2 L1307.1 88.8 L1302.8 85.6 L1306.8 81.3 L1303.2 76.6 L1306.3 71.4 L1303.4 63.5 L1307.2 60.6 L1302.9 58.2 L1306.1 54.0 L1302.8 50.3 L1306.2 47.5 L1302.5 43.2 L1307.1 40.6 L1304.3 32.7 L1307.8 27.8 L1303.4 24.8 L1307.2 22.3 L1303.8 19.5 L1308.0 16.4 L1302.7 12.3 L1307.5 7.5 L1302.5 3.3 L1306.7 -4.0" transform="translate(.7 .7)" fill="none" stroke="#0a0a0a" stroke-width="1"/></g><path d="M-3.0 549.7 L4.2 545.7 L11.9 548.6 L16.0 546.2 L20.6 549.4 L23.9 546.4 L26.6 549.0 L33.7 547.1 L38.4 549.7 L40.6 545.9 L43.2 550.4 L48.5 545.7 L52.1 548.9 L58.9 545.7 L64.3 549.2 L66.7 547.2 L70.1 548.5 L75.6 546.8 L81.7 549.1 L85.3 547.2 L89.6 549.9 L93.8 546.0 L97.2 548.5 L99.7 545.7 L103.5 550.3 L109.0 546.7 L112.7 548.7 L119.9 545.9 L124.0 548.7 L127.5 545.8 L131.5 549.5 L134.3 547.0 L136.8 549.8 L141.7 547.3 L147.9 549.3 L151.3 545.9 L154.3 548.6 L158.6 546.5 L163.3 549.9 L169.9 546.0 L173.0 548.8 L178.3 546.6 L185.8 550.4 L188.9 546.1 L191.7 549.3 L194.7 545.7 L201.2 549.5 L203.6 546.9 L211.1 549.2 L218.3 546.2 L225.4 549.2 L230.6 546.5 L237.4 549.1 L244.1 546.4 L247.4 549.0 L253.4 546.0 L260.6 549.2 L267.6 545.9 L271.5 550.2 L279.4 545.7 L282.7 548.8 L290.4 546.5 L297.4 549.9 L301.1 546.4 L306.9 549.7 L313.5 546.1 L316.1 549.4 L321.1 546.2 L325.4 549.4 L327.8 547.1 L330.3 548.9 L333.4 546.7 L339.9 549.0 L344.1 546.7 L347.1 548.7 L352.7 547.3 L357.3 549.5 L360.7 545.7 L366.4 550.0 L372.1 547.1 L378.4 550.3 L384.9 546.7 L389.1 548.7 L395.6 547.1 L403.2 549.2 L405.9 546.8 L411.5 550.3 L418.0 546.9 L424.1 549.3 L428.2 546.5 L431.4 548.8 L437.3 546.8 L444.6 548.5 L447.4 545.8 L452.5 549.0 L456.7 546.8 L462.7 549.7 L469.7 547.1 L475.1 549.5 L477.9 546.4 L480.8 549.9 L485.1 546.9 L489.1 550.2 L491.4 546.0 L494.7 549.9 L500.8 545.8 L503.7 550.1 L506.5 545.9 L510.4 549.8 L513.2 546.0 L517.9 549.4 L521.1 546.8 L524.5 550.0 L527.2 546.0 L533.9 548.6 L541.8 545.7 L546.2 550.1 L549.7 545.7 L554.4 549.1 L559.1 546.3 L561.7 549.7 L564.1 546.7 L566.4 549.6 L573.9 547.1 L576.8 549.7 L580.8 546.7 L584.4 548.8 L590.6 545.8 L597.1 549.0 L602.3 546.1 L604.8 549.0 L608.4 547.0 L615.1 548.7 L619.7 547.1 L624.8 550.2 L627.6 546.0 L631.3 548.6 L635.4 546.2 L637.8 550.3 L645.1 547.1 L650.7 549.0 L654.1 546.7 L656.6 550.1 L663.8 546.6 L670.0 549.6 L677.0 546.7 L679.3 548.9 L683.3 546.5 L687.5 549.4 L694.0 546.6 L696.4 548.8 L699.4 546.7 L704.1 549.0 L706.7 546.9 L709.8 548.6 L715.4 545.8 L722.2 549.4 L726.8 546.2 L730.4 549.9 L733.0 547.3 L735.3 549.3 L740.9 546.8 L743.7 549.9 L748.5 546.9 L756.3 549.7 L760.4 547.3 L764.2 549.3 L767.5 545.7 L770.4 548.7 L774.4 546.5 L778.8 549.0 L781.8 547.2 L784.8 549.1 L787.1 545.7 L790.3 549.3 L792.7 546.8 L795.9 550.3 L803.4 547.0 L806.7 549.4 L812.3 546.3 L820.0 549.1 L823.8 547.0 L826.7 548.7 L834.0 546.8 L836.3 549.0 L839.4 546.4 L841.7 549.8 L844.3 546.9 L846.7 549.3 L850.4 546.4 L857.1 549.9 L863.0 546.0 L870.8 549.9 L876.0 546.0 L878.5 548.6 L881.2 546.2 L883.5 550.0 L887.8 547.3 L890.8 550.1 L897.3 546.9 L900.2 549.1 L903.6 545.9 L908.1 549.5 L911.8 546.6 L919.0 548.7 L923.0 546.6 L926.1 550.0 L932.3 545.7 L936.9 550.1 L939.2 545.7 L942.6 549.4 L948.3 547.0 L950.9 549.6 L954.6 546.9 L957.3 550.4 L964.7 546.3 L967.2 550.1 L969.5 547.1 L973.1 550.2 L976.9 546.8 L984.4 549.7 L990.0 547.3 L993.4 548.9 L996.2 547.3 L999.2 549.4 L1004.9 545.7 L1012.6 549.8 L1018.8 546.0 L1022.2 549.8 L1025.0 547.2 L1027.9 549.6 L1034.8 546.8 L1040.1 549.9 L1043.8 546.2 L1051.4 549.8 L1058.4 546.3 L1061.6 550.2 L1065.8 546.4 L1068.0 549.3 L1071.5 545.8 L1078.0 549.2 L1081.6 546.4 L1087.2 550.2 L1090.0 546.9 L1097.6 548.8 L1104.7 547.0 L1108.1 550.1 L1115.0 546.6 L1118.3 550.2 L1121.1 546.3 L1126.0 548.6 L1129.3 546.3 L1131.9 549.6 L1138.7 546.1 L1141.9 550.1 L1147.3 545.9 L1155.0 549.0 L1162.4 546.5 L1165.0 548.8 L1167.5 546.3 L1171.2 549.9 L1178.5 546.1 L1186.3 549.7 L1190.9 547.2 L1193.5 549.2 L1197.1 546.1 L1200.1 549.5 L1202.5 546.3 L1206.1 549.5 L1213.9 547.2 L1220.8 549.1 L1224.0 546.7 L1231.6 549.2 L1234.8 546.2 L1241.2 549.1 L1245.1 546.5 L1248.2 549.0 L1252.6 546.9 L1255.8 550.4 L1258.8 545.8 L1261.7 550.0 L1265.4 546.7 L1268.1 549.4 L1271.4 547.2 L1275.5 549.4 L1277.9 546.9 L1284.7 549.5 L1287.7 546.0 L1291.1 550.2 L1297.7 547.3 L1304.5 548.5 L1307.2 539.5 L1304.3 532.4 L1307.6 529.1 L1304.1 526.1 L1305.9 522.3 L1303.8 517.6 L1306.8 513.1 L1303.6 506.1 L1306.7 502.4 L1303.1 496.3 L1306.4 492.8 L1303.5 487.7 L1306.3 481.0 L1303.9 473.6 L1307.0 471.1 L1302.8 466.8 L1306.9 463.0 L1303.1 458.2 L1307.4 454.6 L1302.6 449.1 L1307.7 443.3 L1304.3 437.9 L1307.2 430.9 L1303.5 426.2 L1307.7 423.2 L1302.5 420.3 L1307.2 416.4 L1302.8 413.0 L1305.9 408.3 L1303.1 405.4 L1306.1 400.8 L1303.4 393.4 L1306.1 391.0 L1302.8 386.8 L1306.1 383.2 L1303.4 376.7 L1306.4 371.5 L1302.5 365.4 L1307.9 362.3 L1303.3 360.0 L1307.8 356.2 L1302.5 352.7 L1306.7 349.5 L1303.8 341.6 L1308.0 338.5 L1304.1 336.2 L1306.8 332.4 L1303.3 324.6 L1307.0 322.2 L1303.5 320.0 L1307.8 317.6 L1304.0 310.4 L1307.7 307.5 L1304.2 301.8 L1306.7 299.4 L1303.0 294.2 L1305.9 288.5 L1303.0 282.1 L1307.5 279.7 L1303.0 275.1 L1307.8 271.6 L1304.1 268.7 L1307.5 263.4 L1303.2 257.6 L1306.9 253.6 L1302.5 250.9 L1307.3 247.5 L1304.0 244.3 L1306.7 237.7 L1304.1 235.3 L1306.3 230.3 L1303.4 227.7 L1307.5 223.7 L1303.8 221.5 L1307.6 217.8 L1302.9 214.3 L1306.8 206.7 L1302.9 204.4 L1307.9 202.0 L1303.1 197.0 L1307.1 193.4 L1303.3 189.0 L1305.8 185.2 L1304.2 178.8 L1307.8 176.3 L1303.8 170.5 L1306.6 165.3 L1303.8 158.8 L1306.4 151.8 L1304.0 146.6 L1305.9 143.7 L1303.2 140.6 L1306.1 137.4 L1303.7 130.0 L1306.9 126.0 L1304.2 122.3 L1306.4 118.2 L1302.4 110.3 L1306.6 106.7 L1303.4 98.9 L1306.5 96.1 L1303.3 93.2 L1307.1 88.8 L1302.8 85.6 L1306.8 81.3 L1303.2 76.6 L1306.3 71.4 L1303.4 63.5 L1307.2 60.6 L1302.9 58.2 L1306.1 54.0 L1302.8 50.3 L1306.2 47.5 L1302.5 43.2 L1307.1 40.6 L1304.3 32.7 L1307.8 27.8 L1303.4 24.8 L1307.2 22.3 L1303.8 19.5 L1308.0 16.4 L1302.7 12.3 L1307.5 7.5 L1302.5 3.3 L1306.7 -4.0" fill="none" stroke="#6a6a6a" stroke-width=".7" stroke-linejoin="miter"/></svg>
</body></html>
